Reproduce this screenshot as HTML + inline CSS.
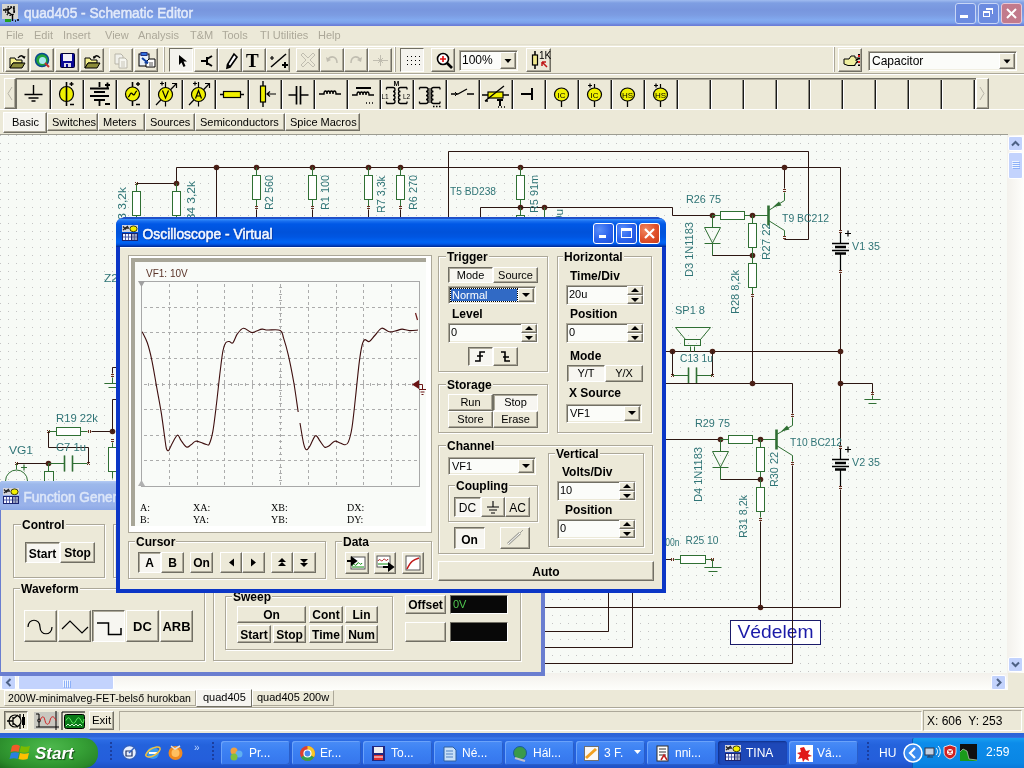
<!DOCTYPE html>
<html><head><meta charset="utf-8">
<style>
*{margin:0;padding:0;box-sizing:border-box}
html,body{width:1024px;height:768px;overflow:hidden;background:#ECE9D8;}
body{will-change:transform;font-family:"Liberation Sans",sans-serif;font-size:11px;color:#000}
.a{position:absolute}
.btn{position:absolute;background:#ECE9D8;border:1px solid;border-color:#FFFFFF #716F64 #716F64 #FFFFFF;box-shadow:inset -1px -1px 0 #ACA899;text-align:center;white-space:nowrap}
.btnp{position:absolute;background:#F6F5EF;border:1px solid;border-color:#716F64 #FFFFFF #FFFFFF #716F64;box-shadow:inset 1px 1px 0 #ACA899;text-align:center;white-space:nowrap}
.tb{position:absolute;background:#ECE9D8;border:1px solid;border-color:#FFFFFF #ACA899 #ACA899 #FFFFFF;}
.tbp{position:absolute;background:#F4F3EE;border:1px solid;border-color:#ACA899 #FFFFFF #FFFFFF #ACA899;}
.grp{position:absolute;border:1px solid #ACA899;box-shadow:1px 1px 0 #FFFFFF, inset 1px 1px 0 #FFFFFF}
.gl{position:absolute;background:#ECE9D8;font-weight:bold;font-size:12px;padding:0 2px;line-height:12px;white-space:nowrap}
.edit{position:absolute;background:#FBFCF9;border:1px solid;border-color:#ACA899 #FFFFFF #FFFFFF #ACA899;box-shadow:inset 1px 1px 0 #716F64;white-space:nowrap}
.t{position:absolute;white-space:nowrap;line-height:1}
svg{position:absolute;overflow:visible}
</style></head><body>


<!-- chrome -->
<!-- ===== Main title bar (inactive) ===== -->
<div class="a" style="left:0;top:0;width:1024px;height:26px;background:linear-gradient(#A0BCF0 0,#7E9EE2 3px,#7896DE 10px,#7C9CE2 15px,#82AAF0 20px,#7AA0EA 23px,#6A7ED8 25px,#6A7ED8 26px)"></div>
<div class="a" style="left:0;top:0;width:1024px;height:26px;background:linear-gradient(90deg,rgba(255,255,255,0) 0,rgba(255,255,255,0) 60%,rgba(120,150,230,0.0) 100%)"></div>
<svg style="left:2px;top:4px" width="17" height="16"><rect x="0" y="0" width="16" height="15" fill="#D6D6D0"/><circle cx="8" cy="7" r="4.5" fill="none" stroke="#000" stroke-width="1.2" stroke-dasharray="1.5 1.5"/><path d="M1 6h5M6 4v6M6 6l4-3M6 8l4 3M10.5 10v7M12 2v7" stroke="#000" stroke-width="1.4"/><rect x="3" y="15" width="6" height="3" fill="#20A020"/><path d="M13 17h1M15 16h2" stroke="#000" stroke-width="1.4"/></svg>
<svg style="left:24px;top:4px" width="180" height="20"><text x="0" y="14" font-family="Liberation Sans" font-size="14" fill="#E2EAFA" stroke="#E2EAFA" stroke-width="0.5" textLength="169" lengthAdjust="spacingAndGlyphs">quad405 - Schematic Editor</text></svg>
<!-- title buttons -->
<div class="a" style="left:955px;top:3px;width:21px;height:21px;border-radius:3px;background:#6B8BE0;border:1px solid #C8D6F6"></div>
<div class="a" style="left:960px;top:15px;width:8px;height:3px;background:#fff"></div>
<div class="a" style="left:978px;top:3px;width:21px;height:21px;border-radius:3px;background:#6B8BE0;border:1px solid #C8D6F6"></div>
<div class="a" style="left:983px;top:11px;width:7px;height:6px;border:1px solid #fff;border-top-width:2px"></div>
<div class="a" style="left:986px;top:8px;width:7px;height:6px;border:1px solid #fff;border-top-width:2px;border-left:none;border-bottom:none"></div>
<div class="a" style="left:1001px;top:3px;width:21px;height:21px;border-radius:3px;background:#C27A8C;border:1px solid #E8C8D6"></div>
<svg style="left:1001px;top:3px" width="21" height="21"><path d="M6 6L15 15M15 6L6 15" stroke="#fff" stroke-width="2"/></svg>

<!-- ===== Menu bar ===== -->
<div class="a" style="left:0;top:26px;width:1024px;height:19px;background:#ECE9D8"></div>
<div class="t" style="top:30px;left:6px;color:#ACA899">File</div>
<div class="t" style="top:30px;left:34px;color:#ACA899">Edit</div>
<div class="t" style="top:30px;left:63px;color:#ACA899">Insert</div>
<div class="t" style="top:30px;left:105px;color:#ACA899">View</div>
<div class="t" style="top:30px;left:138px;color:#ACA899">Analysis</div>
<div class="t" style="top:30px;left:190px;color:#ACA899">T&amp;M</div>
<div class="t" style="top:30px;left:222px;color:#ACA899">Tools</div>
<div class="t" style="top:30px;left:260px;color:#ACA899">TI Utilities</div>
<div class="t" style="top:30px;left:318px;color:#ACA899">Help</div>
<div class="a" style="left:0;top:44px;width:1024px;height:1px;background:#E2DFCE"></div>


<!-- toolbars -->
<div class="a" style="left:0;top:46px;width:1024px;height:1px;background:#FFFFFF"></div>
<div class="a" style="left:0;top:73px;width:1024px;height:1px;background:#ACA899"></div>
<div class="a" style="left:0;top:74px;width:1024px;height:1px;background:#FFFFFF"></div>
<div class="a" style="left:2px;top:47px;width:1px;height:25px;background:#FFFFFF"></div>
<div class="a" style="left:3px;top:47px;width:1px;height:25px;background:#ACA899"></div>
<div class="a" style="left:163px;top:47px;width:1px;height:25px;background:#FFFFFF"></div>
<div class="a" style="left:164px;top:47px;width:1px;height:25px;background:#ACA899"></div>
<div class="a" style="left:394px;top:47px;width:1px;height:25px;background:#FFFFFF"></div>
<div class="a" style="left:395px;top:47px;width:1px;height:25px;background:#ACA899"></div>
<div class="a" style="left:833px;top:47px;width:1px;height:25px;background:#FFFFFF"></div>
<div class="a" style="left:834px;top:47px;width:1px;height:25px;background:#ACA899"></div>
<div class="a" style="left:5px;top:48px;width:24px;height:24px;background:#ECE9D8;border:1px solid;border-color:#FFFFFF #716F64 #716F64 #FFFFFF;box-shadow:inset -1px -1px 0 #ACA899"></div>
<div class="a" style="left:30px;top:48px;width:24px;height:24px;background:#ECE9D8;border:1px solid;border-color:#FFFFFF #716F64 #716F64 #FFFFFF;box-shadow:inset -1px -1px 0 #ACA899"></div>
<div class="a" style="left:55px;top:48px;width:24px;height:24px;background:#ECE9D8;border:1px solid;border-color:#FFFFFF #716F64 #716F64 #FFFFFF;box-shadow:inset -1px -1px 0 #ACA899"></div>
<div class="a" style="left:80px;top:48px;width:24px;height:24px;background:#ECE9D8;border:1px solid;border-color:#FFFFFF #716F64 #716F64 #FFFFFF;box-shadow:inset -1px -1px 0 #ACA899"></div>
<div class="a" style="left:109px;top:48px;width:24px;height:24px;background:#ECE9D8;border:1px solid;border-color:#FFFFFF #716F64 #716F64 #FFFFFF;box-shadow:inset -1px -1px 0 #ACA899"></div>
<div class="a" style="left:134px;top:48px;width:24px;height:24px;background:#ECE9D8;border:1px solid;border-color:#FFFFFF #716F64 #716F64 #FFFFFF;box-shadow:inset -1px -1px 0 #ACA899"></div>
<div class="a" style="left:169px;top:48px;width:24px;height:24px;background:#F4F3EE;border:1px solid;border-color:#716F64 #FFFFFF #FFFFFF #716F64"></div>
<div class="a" style="left:194px;top:48px;width:24px;height:24px;background:#ECE9D8;border:1px solid;border-color:#FFFFFF #716F64 #716F64 #FFFFFF;box-shadow:inset -1px -1px 0 #ACA899"></div>
<div class="a" style="left:218px;top:48px;width:24px;height:24px;background:#ECE9D8;border:1px solid;border-color:#FFFFFF #716F64 #716F64 #FFFFFF;box-shadow:inset -1px -1px 0 #ACA899"></div>
<div class="a" style="left:242px;top:48px;width:24px;height:24px;background:#ECE9D8;border:1px solid;border-color:#FFFFFF #716F64 #716F64 #FFFFFF;box-shadow:inset -1px -1px 0 #ACA899"></div>
<div class="a" style="left:266px;top:48px;width:24px;height:24px;background:#ECE9D8;border:1px solid;border-color:#FFFFFF #716F64 #716F64 #FFFFFF;box-shadow:inset -1px -1px 0 #ACA899"></div>
<div class="a" style="left:296px;top:48px;width:24px;height:24px;background:#ECE9D8;border:1px solid;border-color:#FFFFFF #716F64 #716F64 #FFFFFF;box-shadow:inset -1px -1px 0 #ACA899"></div>
<div class="a" style="left:320px;top:48px;width:24px;height:24px;background:#ECE9D8;border:1px solid;border-color:#FFFFFF #716F64 #716F64 #FFFFFF;box-shadow:inset -1px -1px 0 #ACA899"></div>
<div class="a" style="left:344px;top:48px;width:24px;height:24px;background:#ECE9D8;border:1px solid;border-color:#FFFFFF #716F64 #716F64 #FFFFFF;box-shadow:inset -1px -1px 0 #ACA899"></div>
<div class="a" style="left:368px;top:48px;width:24px;height:24px;background:#ECE9D8;border:1px solid;border-color:#FFFFFF #716F64 #716F64 #FFFFFF;box-shadow:inset -1px -1px 0 #ACA899"></div>
<div class="a" style="left:400px;top:48px;width:24px;height:24px;background:#F4F3EE;border:1px solid;border-color:#716F64 #FFFFFF #FFFFFF #716F64"></div>
<div class="a" style="left:431px;top:48px;width:24px;height:24px;background:#ECE9D8;border:1px solid;border-color:#FFFFFF #716F64 #716F64 #FFFFFF;box-shadow:inset -1px -1px 0 #ACA899"></div>
<div class="a" style="left:526px;top:48px;width:25px;height:24px;background:#ECE9D8;border:1px solid;border-color:#FFFFFF #716F64 #716F64 #FFFFFF;box-shadow:inset -1px -1px 0 #ACA899"></div>
<div class="a" style="left:838px;top:48px;width:24px;height:24px;background:#ECE9D8;border:1px solid;border-color:#FFFFFF #716F64 #716F64 #FFFFFF;box-shadow:inset -1px -1px 0 #ACA899"></div>
<svg style="left:9px;top:55px" width="18" height="15"><path d="M1 3h5l1 2h6v3H4L1 13z" fill="#F5F08C" stroke="#000" stroke-width="1"/><path d="M1 13L4 8h12l-3 5z" fill="#8C8C3A" stroke="#000" stroke-width="1"/><path d="M9 3c2-3 5-3 6 0" stroke="#000" fill="none" stroke-width="1.3"/><path d="M13 2l2.5 2 1-3z" fill="#000"/></svg>
<svg style="left:84px;top:55px" width="18" height="15"><path d="M1 3h5l1 2h6v3H4L1 13z" fill="#F5F08C" stroke="#000" stroke-width="1"/><path d="M1 13L4 8h12l-3 5z" fill="#8C8C3A" stroke="#000" stroke-width="1"/><path d="M10 3c1-3 4-3 6 0" stroke="#000" fill="none" stroke-width="1.3"/><path d="M9 1l0.5 3 2.5-1.5z" fill="#000"/></svg>
<svg style="left:34px;top:52px" width="18" height="18"><circle cx="8" cy="8" r="6.5" fill="#22A33A" stroke="#0A4A90" stroke-width="1.5"/><circle cx="8.5" cy="8.5" r="3.5" fill="#A8E8F0"/><path d="M11 11l4 4" stroke="#C03030" stroke-width="2"/></svg>
<svg style="left:60px;top:53px" width="15" height="15"><rect x="0.5" y="0.5" width="14" height="14" rx="1" fill="#0A0A96" stroke="#000030"/><rect x="3" y="1" width="9" height="7" fill="#F0F0F8"/><rect x="4" y="10" width="7" height="4" fill="#D8D8E8"/><rect x="6" y="11" width="2" height="3" fill="#0A0A96"/></svg>
<svg style="left:112px;top:52px" width="18" height="18"><path d="M3 2h6l2 2v8H3z" fill="#F0F0EA" stroke="#B8B5A8"/><path d="M7 6h6l2 2v8H7z" fill="#F6F6F0" stroke="#B8B5A8"/><path d="M9 10h4M9 12h4M9 14h4" stroke="#C8C5B8"/></svg>
<svg style="left:137px;top:51px" width="20" height="20"><rect x="2" y="3" width="10" height="12" fill="#E8F0F8" stroke="#000"/><rect x="4" y="1.5" width="6" height="3" fill="#3070E0" stroke="#203080"/><path d="M9 16h9V8h-6l-3 3z" fill="#FFFFFF" stroke="#000"/><path d="M5 7l6 5" stroke="#1040A0" stroke-width="2"/><path d="M11 13l-1-4-3 3z" fill="#1040A0"/><path d="M12 12h4M12 14h4" stroke="#555"/></svg>
<svg style="left:177px;top:54px" width="12" height="14"><path d="M2 1v10l2.5-2.5 2 4.5 2-1-2-4.5h3.5z" fill="#000"/></svg>
<svg style="left:199px;top:54px" width="16" height="14"><path d="M2 7h6M8 3v8M8 5l5-3M8 9l5 3" stroke="#000" stroke-width="2" fill="none"/></svg>
<svg style="left:224px;top:53px" width="14" height="16"><path d="M10 1l3 3-7 10-3 1 0.5-3.5z" fill="#fff" stroke="#000" stroke-width="1.6"/><path d="M3.5 11.5l2.5 2.5" stroke="#000" stroke-width="2"/></svg>
<div class="t" style="left:246px;top:51px;font-family:'Liberation Serif',serif;font-weight:bold;font-size:19px">T</div>
<svg style="left:269px;top:51px" width="20" height="20"><path d="M2 16L17 3" stroke="#000" stroke-width="1.5"/><path d="M3 5v4M1 7h4" stroke="#000" stroke-width="1.2"/><path d="M13 14h6M16 11v6" stroke="#000" stroke-width="2"/></svg>
<svg style="left:300px;top:51px" width="17" height="17"><path d="M3 2l5 5 5-5 2 2-5 5 5 5-2 2-5-5-5 5-2-2 5-5-5-5z" fill="none" stroke="#C0BDB0"/></svg>
<svg style="left:324px;top:53px" width="16" height="14"><path d="M4 6c4-4 9-2 9 4" stroke="#C0BDB0" stroke-width="1.5" fill="none"/><path d="M2 4l1 5 4-2z" fill="#C0BDB0"/></svg>
<svg style="left:348px;top:53px" width="16" height="14"><path d="M12 6c-4-4-9-2-9 4" stroke="#C0BDB0" stroke-width="1.5" fill="none"/><path d="M14 4l-1 5-4-2z" fill="#C0BDB0"/></svg>
<svg style="left:372px;top:52px" width="17" height="17"><path d="M1 8.5h15M8.5 3v11M6 6l5 5M6 11l5-5" stroke="#C0BDB0" stroke-width="1"/></svg>
<svg style="left:404px;top:52px" width="18" height="16"><rect x="3" y="4" width="1" height="1" fill="#000"/><rect x="3" y="8" width="1" height="1" fill="#000"/><rect x="3" y="12" width="1" height="1" fill="#000"/><rect x="7" y="4" width="1" height="1" fill="#000"/><rect x="7" y="8" width="1" height="1" fill="#000"/><rect x="7" y="12" width="1" height="1" fill="#000"/><rect x="11" y="4" width="1" height="1" fill="#000"/><rect x="11" y="8" width="1" height="1" fill="#000"/><rect x="11" y="12" width="1" height="1" fill="#000"/><rect x="15" y="4" width="1" height="1" fill="#000"/><rect x="15" y="8" width="1" height="1" fill="#000"/><rect x="15" y="12" width="1" height="1" fill="#000"/></svg>
<svg style="left:435px;top:51px" width="20" height="20"><circle cx="8" cy="8" r="5.5" fill="#FFFFFF" stroke="#000" stroke-width="1.6"/><path d="M8 5v6M5 8h6" stroke="#E01010" stroke-width="1.6"/><path d="M12 12l5 5" stroke="#000" stroke-width="2.6"/></svg>
<div class="a" style="left:459px;top:50px;width:59px;height:21px;background:#FBFCF9;border:1px solid;border-color:#ACA899 #FFFFFF #FFFFFF #ACA899;box-shadow:inset 1px 1px 0 #716F64, inset -1px -1px 0 #F1EFE2"></div>
<div class="t" style="left:462px;top:54px;font-size:12px">100%</div>
<div class="a" style="left:500px;top:52px;width:16px;height:17px;background:#ECE9D8;border:1px solid;border-color:#FFFFFF #716F64 #716F64 #FFFFFF;box-shadow:inset -1px -1px 0 #ACA899"></div>
<svg style="left:500px;top:52px" width="16" height="17"><path d="M4.5 7h7l-3.5 4z" fill="#000"/></svg>
<svg style="left:530px;top:50px" width="20" height="20"><path d="M5 1v4M5 15v4" stroke="#000" stroke-width="1.5"/><rect x="2.5" y="5" width="5" height="10" fill="#F0E88C" stroke="#000" stroke-width="1.2"/><text x="9" y="9" font-size="10" font-family="Liberation Sans" fill="#000">1K</text><path d="M17 17l-5-5M12 12v4M12 12h4" stroke="#C01818" stroke-width="1.5"/></svg>
<svg style="left:842px;top:51px" width="20" height="18"><path d="M2 8h5l2-3h4v2h3v1.5h-2v1.5h1.5v1.5H14v1.5h-1v1.5H6L2 13z" fill="#F0F0A0" stroke="#000" stroke-width="1"/><path d="M17 3v12" stroke="#000" stroke-width="2" stroke-dasharray="2 1.5"/><path d="M17 4v2M17 10v2" stroke="#E02020" stroke-width="2"/></svg>
<div class="a" style="left:868px;top:51px;width:149px;height:20px;background:#FBFCF9;border:1px solid;border-color:#ACA899 #FFFFFF #FFFFFF #ACA899;box-shadow:inset 1px 1px 0 #716F64, inset -1px -1px 0 #F1EFE2"></div>
<div class="t" style="left:872px;top:55px;font-size:12px">Capacitor</div>
<div class="a" style="left:999px;top:53px;width:16px;height:16px;background:#ECE9D8;border:1px solid;border-color:#FFFFFF #716F64 #716F64 #FFFFFF;box-shadow:inset -1px -1px 0 #ACA899"></div>
<svg style="left:999px;top:53px" width="16" height="16"><path d="M4.5 6.5h7l-3.5 4z" fill="#000"/></svg>
<div class="a" style="left:4px;top:78px;width:12px;height:31px;background:#ECE9D8;border:1px solid;border-color:#FFFFFF #716F64 #716F64 #FFFFFF;box-shadow:inset -1px -1px 0 #ACA899"></div>
<svg style="left:4px;top:78px" width="12" height="31"><path d="M8 9l-4 6.5 4 6.5" stroke="#B8B5A8" fill="none" stroke-width="1"/></svg>
<div class="a" style="left:976px;top:78px;width:13px;height:31px;background:#ECE9D8;border:1px solid;border-color:#FFFFFF #716F64 #716F64 #FFFFFF;box-shadow:inset -1px -1px 0 #ACA899"></div>
<svg style="left:976px;top:78px" width="13" height="31"><path d="M4 9l4 6.5-4 6.5" stroke="#B8B5A8" fill="none" stroke-width="1"/></svg>
<div class="a" style="left:16px;top:78px;width:960px;height:31px;background:#ECE9D8;border-top:1px solid #716F64;border-left:1px solid #716F64"></div>
<div class="a" style="left:17px;top:79px;width:959px;height:1px;background:#ACA899"></div>
<div class="a" style="left:50px;top:80px;width:1px;height:29px;background:#1A1A1A"></div>
<div class="a" style="left:49px;top:80px;width:1px;height:29px;background:#8A887C"></div>
<div class="a" style="left:51px;top:80px;width:1px;height:29px;background:#FFFFFF"></div>
<div class="a" style="left:83px;top:80px;width:1px;height:29px;background:#1A1A1A"></div>
<div class="a" style="left:82px;top:80px;width:1px;height:29px;background:#8A887C"></div>
<div class="a" style="left:84px;top:80px;width:1px;height:29px;background:#FFFFFF"></div>
<div class="a" style="left:116px;top:80px;width:1px;height:29px;background:#1A1A1A"></div>
<div class="a" style="left:115px;top:80px;width:1px;height:29px;background:#8A887C"></div>
<div class="a" style="left:117px;top:80px;width:1px;height:29px;background:#FFFFFF"></div>
<div class="a" style="left:149px;top:80px;width:1px;height:29px;background:#1A1A1A"></div>
<div class="a" style="left:148px;top:80px;width:1px;height:29px;background:#8A887C"></div>
<div class="a" style="left:150px;top:80px;width:1px;height:29px;background:#FFFFFF"></div>
<div class="a" style="left:182px;top:80px;width:1px;height:29px;background:#1A1A1A"></div>
<div class="a" style="left:181px;top:80px;width:1px;height:29px;background:#8A887C"></div>
<div class="a" style="left:183px;top:80px;width:1px;height:29px;background:#FFFFFF"></div>
<div class="a" style="left:215px;top:80px;width:1px;height:29px;background:#1A1A1A"></div>
<div class="a" style="left:214px;top:80px;width:1px;height:29px;background:#8A887C"></div>
<div class="a" style="left:216px;top:80px;width:1px;height:29px;background:#FFFFFF"></div>
<div class="a" style="left:248px;top:80px;width:1px;height:29px;background:#1A1A1A"></div>
<div class="a" style="left:247px;top:80px;width:1px;height:29px;background:#8A887C"></div>
<div class="a" style="left:249px;top:80px;width:1px;height:29px;background:#FFFFFF"></div>
<div class="a" style="left:281px;top:80px;width:1px;height:29px;background:#1A1A1A"></div>
<div class="a" style="left:280px;top:80px;width:1px;height:29px;background:#8A887C"></div>
<div class="a" style="left:282px;top:80px;width:1px;height:29px;background:#FFFFFF"></div>
<div class="a" style="left:314px;top:80px;width:1px;height:29px;background:#1A1A1A"></div>
<div class="a" style="left:313px;top:80px;width:1px;height:29px;background:#8A887C"></div>
<div class="a" style="left:315px;top:80px;width:1px;height:29px;background:#FFFFFF"></div>
<div class="a" style="left:347px;top:80px;width:1px;height:29px;background:#1A1A1A"></div>
<div class="a" style="left:346px;top:80px;width:1px;height:29px;background:#8A887C"></div>
<div class="a" style="left:348px;top:80px;width:1px;height:29px;background:#FFFFFF"></div>
<div class="a" style="left:380px;top:80px;width:1px;height:29px;background:#1A1A1A"></div>
<div class="a" style="left:379px;top:80px;width:1px;height:29px;background:#8A887C"></div>
<div class="a" style="left:381px;top:80px;width:1px;height:29px;background:#FFFFFF"></div>
<div class="a" style="left:413px;top:80px;width:1px;height:29px;background:#1A1A1A"></div>
<div class="a" style="left:412px;top:80px;width:1px;height:29px;background:#8A887C"></div>
<div class="a" style="left:414px;top:80px;width:1px;height:29px;background:#FFFFFF"></div>
<div class="a" style="left:446px;top:80px;width:1px;height:29px;background:#1A1A1A"></div>
<div class="a" style="left:445px;top:80px;width:1px;height:29px;background:#8A887C"></div>
<div class="a" style="left:447px;top:80px;width:1px;height:29px;background:#FFFFFF"></div>
<div class="a" style="left:479px;top:80px;width:1px;height:29px;background:#1A1A1A"></div>
<div class="a" style="left:478px;top:80px;width:1px;height:29px;background:#8A887C"></div>
<div class="a" style="left:480px;top:80px;width:1px;height:29px;background:#FFFFFF"></div>
<div class="a" style="left:512px;top:80px;width:1px;height:29px;background:#1A1A1A"></div>
<div class="a" style="left:511px;top:80px;width:1px;height:29px;background:#8A887C"></div>
<div class="a" style="left:513px;top:80px;width:1px;height:29px;background:#FFFFFF"></div>
<div class="a" style="left:545px;top:80px;width:1px;height:29px;background:#1A1A1A"></div>
<div class="a" style="left:544px;top:80px;width:1px;height:29px;background:#8A887C"></div>
<div class="a" style="left:546px;top:80px;width:1px;height:29px;background:#FFFFFF"></div>
<div class="a" style="left:578px;top:80px;width:1px;height:29px;background:#1A1A1A"></div>
<div class="a" style="left:577px;top:80px;width:1px;height:29px;background:#8A887C"></div>
<div class="a" style="left:579px;top:80px;width:1px;height:29px;background:#FFFFFF"></div>
<div class="a" style="left:611px;top:80px;width:1px;height:29px;background:#1A1A1A"></div>
<div class="a" style="left:610px;top:80px;width:1px;height:29px;background:#8A887C"></div>
<div class="a" style="left:612px;top:80px;width:1px;height:29px;background:#FFFFFF"></div>
<div class="a" style="left:644px;top:80px;width:1px;height:29px;background:#1A1A1A"></div>
<div class="a" style="left:643px;top:80px;width:1px;height:29px;background:#8A887C"></div>
<div class="a" style="left:645px;top:80px;width:1px;height:29px;background:#FFFFFF"></div>
<div class="a" style="left:677px;top:80px;width:1px;height:29px;background:#1A1A1A"></div>
<div class="a" style="left:676px;top:80px;width:1px;height:29px;background:#8A887C"></div>
<div class="a" style="left:678px;top:80px;width:1px;height:29px;background:#FFFFFF"></div>
<div class="a" style="left:710px;top:80px;width:1px;height:29px;background:#1A1A1A"></div>
<div class="a" style="left:709px;top:80px;width:1px;height:29px;background:#8A887C"></div>
<div class="a" style="left:711px;top:80px;width:1px;height:29px;background:#FFFFFF"></div>
<div class="a" style="left:743px;top:80px;width:1px;height:29px;background:#1A1A1A"></div>
<div class="a" style="left:742px;top:80px;width:1px;height:29px;background:#8A887C"></div>
<div class="a" style="left:744px;top:80px;width:1px;height:29px;background:#FFFFFF"></div>
<div class="a" style="left:776px;top:80px;width:1px;height:29px;background:#1A1A1A"></div>
<div class="a" style="left:775px;top:80px;width:1px;height:29px;background:#8A887C"></div>
<div class="a" style="left:777px;top:80px;width:1px;height:29px;background:#FFFFFF"></div>
<div class="a" style="left:809px;top:80px;width:1px;height:29px;background:#1A1A1A"></div>
<div class="a" style="left:808px;top:80px;width:1px;height:29px;background:#8A887C"></div>
<div class="a" style="left:810px;top:80px;width:1px;height:29px;background:#FFFFFF"></div>
<div class="a" style="left:842px;top:80px;width:1px;height:29px;background:#1A1A1A"></div>
<div class="a" style="left:841px;top:80px;width:1px;height:29px;background:#8A887C"></div>
<div class="a" style="left:843px;top:80px;width:1px;height:29px;background:#FFFFFF"></div>
<div class="a" style="left:875px;top:80px;width:1px;height:29px;background:#1A1A1A"></div>
<div class="a" style="left:874px;top:80px;width:1px;height:29px;background:#8A887C"></div>
<div class="a" style="left:876px;top:80px;width:1px;height:29px;background:#FFFFFF"></div>
<div class="a" style="left:908px;top:80px;width:1px;height:29px;background:#1A1A1A"></div>
<div class="a" style="left:907px;top:80px;width:1px;height:29px;background:#8A887C"></div>
<div class="a" style="left:909px;top:80px;width:1px;height:29px;background:#FFFFFF"></div>
<div class="a" style="left:941px;top:80px;width:1px;height:29px;background:#1A1A1A"></div>
<div class="a" style="left:940px;top:80px;width:1px;height:29px;background:#8A887C"></div>
<div class="a" style="left:942px;top:80px;width:1px;height:29px;background:#FFFFFF"></div>
<div class="a" style="left:974px;top:80px;width:1px;height:29px;background:#1A1A1A"></div>
<div class="a" style="left:973px;top:80px;width:1px;height:29px;background:#8A887C"></div>
<div class="a" style="left:975px;top:80px;width:1px;height:29px;background:#FFFFFF"></div>
<div class="a" style="left:0;top:109px;width:1024px;height:1px;background:#FFFFFF"></div>
<svg style="left:17px;top:79px" width="33" height="30"><path d="M16.5 6v9" stroke="#000" stroke-width="1.4"/><path d="M7.5 15.5h18M11.5 19h10M14.5 22h4" stroke="#000" stroke-width="1.6"/></svg>
<svg style="left:50px;top:79px" width="33" height="30"><ellipse cx="16.5" cy="15" rx="7" ry="7.5" fill="#F0F000" stroke="#000" stroke-width="1.2"/><path d="M16.5 3v24" stroke="#000" stroke-width="1.6"/><path d="M19.5 5h4M21.5 3v4M20 25.5h4" stroke="#000" stroke-width="1.4"/></svg>
<svg style="left:83px;top:79px" width="33" height="30"><path d="M16.5 3v5M16.5 22v5M7 9.5h19M11 13h11M7 17h19M11 21h11M22 6h5M24.5 3.5v5M22 25h5" stroke="#000" stroke-width="1.8"/></svg>
<svg style="left:116px;top:79px" width="33" height="30"><circle cx="16.5" cy="15" r="7" fill="#F0F000" stroke="#000" stroke-width="1.2"/><path d="M16.5 3v5M16.5 22v5" stroke="#000" stroke-width="1.6"/><path d="M12 18c2 0 2-6 4.5-3s2.5 -3 4.5-3" stroke="#000" stroke-width="1.2" fill="none"/><path d="M20 5h4M22 3v4M20 25.5h4" stroke="#000" stroke-width="1.4"/></svg>
<svg style="left:149px;top:79px" width="33" height="30"><path d="M7 26L27 5" stroke="#000" stroke-width="1.2"/><path d="M23 4.5h4.5v4.5" stroke="#000" stroke-width="1.2" fill="none"/><circle cx="16.5" cy="15.5" r="7" fill="#F0F000" stroke="#000" stroke-width="1.2"/><path d="M13.5 11.5l3 7.5 3-7.5" stroke="#000" stroke-width="1.2" fill="none"/><path d="M11 4.5h4M13 2.5v4M16.5 3v5.5M16.5 22.5v5" stroke="#000" stroke-width="1.2"/></svg>
<svg style="left:182px;top:79px" width="33" height="30"><path d="M7 26L27 5" stroke="#000" stroke-width="1.2"/><path d="M23 4.5h4.5v4.5" stroke="#000" stroke-width="1.2" fill="none"/><circle cx="16.5" cy="15.5" r="7" fill="#F0F000" stroke="#000" stroke-width="1.2"/><path d="M13.5 19.5l3-8 3 8M14.5 17h4" stroke="#000" stroke-width="1.2" fill="none"/><path d="M11 4.5h4M13 2.5v4M16.5 3v5.5M16.5 22.5v5" stroke="#000" stroke-width="1.2"/></svg>
<svg style="left:215px;top:79px" width="33" height="30"><path d="M5 15.5h4M25 15.5h4" stroke="#000" stroke-width="1.6"/><rect x="8.5" y="12.5" width="17" height="6" fill="#F0F000" stroke="#000" stroke-width="1.2"/></svg>
<svg style="left:248px;top:79px" width="33" height="30"><path d="M15 2v5M15 23v5" stroke="#000" stroke-width="1.4"/><rect x="12.5" y="7" width="5" height="16" fill="#F0F000" stroke="#000" stroke-width="1.2"/><path d="M28 15h-9M22 12.5l-3 2.5 3 2.5" stroke="#000" stroke-width="1.2" fill="none"/></svg>
<svg style="left:281px;top:79px" width="33" height="30"><path d="M7.5 16h8M19.5 16h8" stroke="#000" stroke-width="1.6"/><path d="M15.5 7v18.5M19.5 7v18.5" stroke="#000" stroke-width="1.7"/></svg>
<svg style="left:314px;top:79px" width="33" height="30"><path d="M5 15h5c0-4 3-4 3 0 0-4 3-4 3 0 0-4 3-4 3 0 0-4 3-4 3 0h5" stroke="#000" stroke-width="1.4" fill="none"/></svg>
<svg style="left:347px;top:79px" width="33" height="30"><path d="M9 9h15" stroke="#000" stroke-width="2"/><path d="M5 16h5c0-4 3-4 3 0 0-4 3-4 3 0 0-4 3-4 3 0 0-4 3-4 3 0h5" stroke="#000" stroke-width="1.4" fill="none"/><path d="M19 24h1M22 24h1M25 24h1" stroke="#000" stroke-width="1.5"/></svg>
<svg style="left:380px;top:79px" width="33" height="30"><path d="M6.5 8.5h6.5a2 2 0 0 1 0 4a2 2 0 0 1 0 4a2 2 0 0 1 0 4a2 2 0 0 1 0 4h-6.5 M27 8.5h-6.5a2 2 0 0 0 0 4a2 2 0 0 0 0 4a2 2 0 0 0 0 4a2 2 0 0 0 0 4h6.5 M6.5 8.5v2M6.5 24.5v-2M27 8.5v2M27 24.5v-2" stroke="#000" stroke-width="1.3" fill="none"/><text x="13.5" y="7" font-size="7" font-weight="bold" font-family="Liberation Sans">M</text><text x="1.5" y="20" font-size="6.5" font-family="Liberation Sans">L1</text><text x="23" y="20" font-size="6.5" font-family="Liberation Sans">L2</text></svg>
<svg style="left:413px;top:79px" width="33" height="30"><path d="M6.5 8.5h6.5a2 2 0 0 1 0 4a2 2 0 0 1 0 4a2 2 0 0 1 0 4a2 2 0 0 1 0 4h-6.5 M27 8.5h-6.5a2 2 0 0 0 0 4a2 2 0 0 0 0 4a2 2 0 0 0 0 4a2 2 0 0 0 0 4h6.5 M6.5 8.5v2M6.5 24.5v-2M27 8.5v2M27 24.5v-2" stroke="#000" stroke-width="1.3" fill="none"/><path d="M16 9v15M18 9v15" stroke="#000" stroke-width="1"/><path d="M20 27.5h1.5M23 27.5h1.5M26 27.5h1.5" stroke="#000" stroke-width="1.5"/></svg>
<svg style="left:446px;top:79px" width="33" height="30"><path d="M5 15h7M21 15h7M12 15l9-5" stroke="#000" stroke-width="1.4" fill="none"/><path d="M9 13l2 2-2 2" stroke="#000" stroke-width="1" fill="none"/></svg>
<svg style="left:479px;top:79px" width="33" height="30"><path d="M3 16h6M24 16h6" stroke="#000" stroke-width="1.5"/><rect x="9" y="13" width="15" height="6" fill="#F0F000" stroke="#000" stroke-width="1.2"/><path d="M6 22L25 7M9 22h-3" stroke="#000" stroke-width="1.3" fill="none"/><path d="M18 21h6M21 21v6" stroke="#000" stroke-width="2"/><path d="M19 28h1M22 28h1M25 28h1" stroke="#000" stroke-width="1.5"/></svg>
<svg style="left:512px;top:79px" width="33" height="30"><path d="M9 15h11M20 9v12" stroke="#000" stroke-width="2"/></svg>
<svg style="left:545px;top:79px" width="33" height="30"><ellipse cx="16.5" cy="15.5" rx="7" ry="6.5" fill="#F0F000" stroke="#000" stroke-width="1.2"/><path d="M16.5 22v6" stroke="#000" stroke-width="1.3"/><text x="16.5" y="18.5" text-anchor="middle" font-size="8" font-family="Liberation Sans" fill="#000">IC</text></svg>
<svg style="left:578px;top:79px" width="33" height="30"><ellipse cx="16.5" cy="15.5" rx="7" ry="6.5" fill="#F0F000" stroke="#000" stroke-width="1.2"/><path d="M16.5 22v6" stroke="#000" stroke-width="1.3"/><text x="16.5" y="18.5" text-anchor="middle" font-size="8" font-family="Liberation Sans" fill="#000">IC</text><path d="M10 6.5h4M12 4.5v4M16.5 5v4" stroke="#000" stroke-width="1.2"/></svg>
<svg style="left:611px;top:79px" width="33" height="30"><ellipse cx="16.5" cy="15.5" rx="7" ry="6.5" fill="#F0F000" stroke="#000" stroke-width="1.2"/><path d="M16.5 22v6" stroke="#000" stroke-width="1.3"/><text x="16.5" y="18.5" text-anchor="middle" font-size="8" font-family="Liberation Sans" fill="#000">HS</text></svg>
<svg style="left:644px;top:79px" width="33" height="30"><ellipse cx="16.5" cy="15.5" rx="7" ry="6.5" fill="#F0F000" stroke="#000" stroke-width="1.2"/><path d="M16.5 22v6" stroke="#000" stroke-width="1.3"/><text x="16.5" y="18.5" text-anchor="middle" font-size="8" font-family="Liberation Sans" fill="#000">HS</text><path d="M10 6.5h4M12 4.5v4M16.5 5v4" stroke="#000" stroke-width="1.2"/></svg>
<div class="a" style="left:0;top:110px;width:1024px;height:24px;background:#ECE9D8"></div>
<div class="a" style="left:3px;top:112px;width:44px;height:21px;background:#F6F5F0;border:1px solid;border-color:#FFFFFF #716F64 #716F64 #FFFFFF;box-shadow:inset -1px -1px 0 #ACA899"></div>
<div class="t" style="left:12px;top:117px;font-size:11px">Basic</div>
<div class="a" style="left:47px;top:113px;width:51px;height:18px;background:#ECE9D8;border:1px solid;border-color:#FFFFFF #716F64 #716F64 #FFFFFF;box-shadow:inset -1px -1px 0 #ACA899"></div>
<div class="t" style="left:52px;top:117px;font-size:11px">Switches</div>
<div class="a" style="left:98px;top:113px;width:47px;height:18px;background:#ECE9D8;border:1px solid;border-color:#FFFFFF #716F64 #716F64 #FFFFFF;box-shadow:inset -1px -1px 0 #ACA899"></div>
<div class="t" style="left:103px;top:117px;font-size:11px">Meters</div>
<div class="a" style="left:145px;top:113px;width:50px;height:18px;background:#ECE9D8;border:1px solid;border-color:#FFFFFF #716F64 #716F64 #FFFFFF;box-shadow:inset -1px -1px 0 #ACA899"></div>
<div class="t" style="left:150px;top:117px;font-size:11px">Sources</div>
<div class="a" style="left:195px;top:113px;width:90px;height:18px;background:#ECE9D8;border:1px solid;border-color:#FFFFFF #716F64 #716F64 #FFFFFF;box-shadow:inset -1px -1px 0 #ACA899"></div>
<div class="t" style="left:200px;top:117px;font-size:11px">Semiconductors</div>
<div class="a" style="left:285px;top:113px;width:75px;height:18px;background:#ECE9D8;border:1px solid;border-color:#FFFFFF #716F64 #716F64 #FFFFFF;box-shadow:inset -1px -1px 0 #ACA899"></div>
<div class="t" style="left:290px;top:117px;font-size:11px">Spice Macros</div>
<!-- canvas -->
<!-- ===== Canvas ===== -->
<div class="a" style="left:0;top:134px;width:1008px;height:539px;background:#F7FAF6;border-top:1px solid #9D9D92"></div>
<svg style="left:0;top:134px" width="1008" height="539">
<defs><pattern id="dots" x="0" y="1" width="8" height="8" patternUnits="userSpaceOnUse"><rect x="0" y="0" width="1" height="1" fill="#C4C4C4"/></pattern></defs>
<rect x="0" y="1" width="1008" height="538" fill="url(#dots)"/>
</svg>


<!-- schem -->
<svg style="left:0;top:0" width="1008" height="673" font-family="Liberation Sans, sans-serif"><g>
<clipPath id="cc"><rect x="0" y="135" width="1007" height="538"/></clipPath><g clip-path="url(#cc)">
<rect x="730.5" y="620.5" width="90" height="24" fill="#FFFFFF" stroke="#1A1A6A" stroke-width="1"/>
<text x="737.5" y="638" font-size="19" fill="#1A1AA8" textLength="76" lengthAdjust="spacingAndGlyphs">Védelem</text>
<path d="M176.5 167.5 L840.5 167.5" stroke="#2C1612" stroke-width="1" fill="none"/>
<path d="M176.5 167.5 L176.5 183.5" stroke="#2C1612" stroke-width="1" fill="none"/>
<path d="M136.5 183.5 L176.5 183.5" stroke="#2C1612" stroke-width="1" fill="none"/>
<path d="M135.0 182.0l3 3M138.0 182.0l-3 3" stroke="#6A3020" stroke-width="1"/>
<circle cx="176.5" cy="183.5" r="2.8" fill="#4A2016"/>
<circle cx="216.5" cy="167.5" r="2.8" fill="#4A2016"/>
<circle cx="256.5" cy="167.5" r="2.8" fill="#4A2016"/>
<circle cx="312.5" cy="167.5" r="2.8" fill="#4A2016"/>
<circle cx="368.5" cy="167.5" r="2.8" fill="#4A2016"/>
<circle cx="400.5" cy="167.5" r="2.8" fill="#4A2016"/>
<path d="M136.5 183.5 L136.5 191.5" stroke="#2F6F33" stroke-width="1" fill="none"/>
<rect x="132.5" y="191.5" width="8" height="24" fill="#FFFFFF" stroke="#2F6F33" stroke-width="1"/>
<path d="M136.5 215.5 L136.5 220.5" stroke="#2F6F33" stroke-width="1" fill="none"/>
<path d="M176.5 183.5 L176.5 191.5" stroke="#2F6F33" stroke-width="1" fill="none"/>
<rect x="172.5" y="191.5" width="8" height="24" fill="#FFFFFF" stroke="#2F6F33" stroke-width="1"/>
<path d="M176.5 215.5 L176.5 220.5" stroke="#2F6F33" stroke-width="1" fill="none"/>
<path d="M256.5 167.5 L256.5 175.5" stroke="#2F6F33" stroke-width="1" fill="none"/>
<rect x="252.5" y="175.5" width="8" height="24" fill="#FFFFFF" stroke="#2F6F33" stroke-width="1"/>
<path d="M256.5 199.5 L256.5 206.5" stroke="#2F6F33" stroke-width="1" fill="none"/>
<path d="M255.0 206.5h3M255.0 208.5h3" stroke="#6A3020" stroke-width="1"/>
<path d="M256.5 209.5 L256.5 220.5" stroke="#2C1612" stroke-width="1" fill="none"/>
<path d="M312.5 167.5 L312.5 175.5" stroke="#2F6F33" stroke-width="1" fill="none"/>
<rect x="308.5" y="175.5" width="8" height="24" fill="#FFFFFF" stroke="#2F6F33" stroke-width="1"/>
<path d="M312.5 199.5 L312.5 206.5" stroke="#2F6F33" stroke-width="1" fill="none"/>
<path d="M311.0 206.5h3M311.0 208.5h3" stroke="#6A3020" stroke-width="1"/>
<path d="M312.5 209.5 L312.5 220.5" stroke="#2C1612" stroke-width="1" fill="none"/>
<path d="M368.5 167.5 L368.5 175.5" stroke="#2F6F33" stroke-width="1" fill="none"/>
<rect x="364.5" y="175.5" width="8" height="24" fill="#FFFFFF" stroke="#2F6F33" stroke-width="1"/>
<path d="M368.5 199.5 L368.5 206.5" stroke="#2F6F33" stroke-width="1" fill="none"/>
<path d="M367.0 206.5h3M367.0 208.5h3" stroke="#6A3020" stroke-width="1"/>
<path d="M368.5 209.5 L368.5 220.5" stroke="#2C1612" stroke-width="1" fill="none"/>
<path d="M400.5 167.5 L400.5 175.5" stroke="#2F6F33" stroke-width="1" fill="none"/>
<rect x="396.5" y="175.5" width="8" height="24" fill="#FFFFFF" stroke="#2F6F33" stroke-width="1"/>
<path d="M400.5 199.5 L400.5 206.5" stroke="#2F6F33" stroke-width="1" fill="none"/>
<path d="M399.0 206.5h3M399.0 208.5h3" stroke="#6A3020" stroke-width="1"/>
<path d="M400.5 209.5 L400.5 220.5" stroke="#2C1612" stroke-width="1" fill="none"/>
<path d="M216.5 167.5 L216.5 220.5" stroke="#2C1612" stroke-width="1" fill="none"/>
<path d="M448.5 151.5 L448.5 220.5" stroke="#2C1612" stroke-width="1" fill="none"/>
<path d="M448.5 151.5 L808.5 151.5" stroke="#2C1612" stroke-width="1" fill="none"/>
<path d="M808.5 151.5 L808.5 239.5" stroke="#2C1612" stroke-width="1" fill="none"/>
<path d="M784.5 239.5 L808.5 239.5" stroke="#2C1612" stroke-width="1" fill="none"/>
<circle cx="520.5" cy="167.5" r="2.8" fill="#4A2016"/>
<path d="M520.5 167.5 L520.5 175.5" stroke="#2F6F33" stroke-width="1" fill="none"/>
<rect x="516.5" y="175.5" width="8" height="24" fill="#FFFFFF" stroke="#2F6F33" stroke-width="1"/>
<path d="M520.5 199.5 L520.5 207.5" stroke="#2F6F33" stroke-width="1" fill="none"/>
<circle cx="520.5" cy="207.5" r="2.8" fill="#4A2016"/>
<path d="M480.5 207.5 L672.5 207.5" stroke="#2C1612" stroke-width="1" fill="none"/>
<path d="M480.5 207.5 L480.5 220.5" stroke="#2C1612" stroke-width="1" fill="none"/>
<circle cx="544.5" cy="207.5" r="2.8" fill="#4A2016"/>
<path d="M520.5 207.5 L520.5 215.5" stroke="#2F6F33" stroke-width="1" fill="none"/>
<rect x="516.5" y="215.5" width="8" height="10" fill="none" stroke="#2F6F33"/>
<path d="M544.5 207.5 L544.5 220.5" stroke="#2F6F33" stroke-width="1" fill="none"/>
<path d="M672.5 207.5 L672.5 215.5" stroke="#2C1612" stroke-width="1" fill="none"/>
<path d="M672.5 215.5 L712.5 215.5" stroke="#2C1612" stroke-width="1" fill="none"/>
<circle cx="712.5" cy="215.5" r="2.8" fill="#4A2016"/>
<rect x="720.5" y="211.5" width="24" height="8" fill="#FFFFFF" stroke="#2F6F33" stroke-width="1"/>
<path d="M712.5 215.5 L720.5 215.5" stroke="#2F6F33" stroke-width="1" fill="none"/>
<path d="M744.5 215.5 L768.5 215.5" stroke="#2F6F33" stroke-width="1" fill="none"/>
<circle cx="752.5" cy="215.5" r="2.8" fill="#4A2016"/>
<path d="M768.5 205.5 L768.5 225.5" stroke="#2F6F33" stroke-width="2.6" fill="none"/>
<path d="M768.5 210.5 L784.5 200.5" stroke="#2F6F33" stroke-width="1" fill="none"/>
<path d="M784.5 200.5 L784.5 192.5" stroke="#2F6F33" stroke-width="1" fill="none"/>
<path d="M783.0 189.5h3M783.0 191.5h3" stroke="#6A3020" stroke-width="1"/>
<path d="M784.5 188.5 L784.5 167.5" stroke="#2C1612" stroke-width="1" fill="none"/>
<circle cx="784.5" cy="167.5" r="2.8" fill="#4A2016"/>
<path d="M773 207L779 201.5L781.5 205.5z" fill="#2F6F33"/>
<path d="M768.5 220.5 L784.5 230.5" stroke="#2F6F33" stroke-width="1" fill="none"/>
<path d="M784.5 230.5 L784.5 236.5" stroke="#2F6F33" stroke-width="1" fill="none"/>
<path d="M783.0 236.5h3M783.0 238.5h3" stroke="#6A3020" stroke-width="1"/>
<path d="M712.5 215.5 L712.5 227.5" stroke="#2F6F33" stroke-width="1" fill="none"/>
<path d="M704.5 227.5h16l-8 15.5z" fill="none" stroke="#2F6F33"/>
<path d="M704.5 243.5 L720.5 243.5" stroke="#2F6F33" stroke-width="1" fill="none"/>
<path d="M712.5 243.5 L712.5 255.5" stroke="#2F6F33" stroke-width="1" fill="none"/>
<path d="M712.5 255.5 L752.5 255.5" stroke="#2C1612" stroke-width="1" fill="none"/>
<circle cx="752.5" cy="255.5" r="2.8" fill="#4A2016"/>
<rect x="748.5" y="223.5" width="8" height="24" fill="#FFFFFF" stroke="#2F6F33" stroke-width="1"/>
<path d="M752.5 215.5 L752.5 223.5" stroke="#2F6F33" stroke-width="1" fill="none"/>
<path d="M752.5 247.5 L752.5 255.5" stroke="#2F6F33" stroke-width="1" fill="none"/>
<path d="M752.5 255.5 L752.5 263.5" stroke="#2F6F33" stroke-width="1" fill="none"/>
<rect x="748.5" y="263.5" width="8" height="24" fill="#FFFFFF" stroke="#2F6F33" stroke-width="1"/>
<path d="M752.5 287.5 L752.5 294.5" stroke="#2F6F33" stroke-width="1" fill="none"/>
<path d="M751.0 294.5h3M751.0 296.5h3" stroke="#6A3020" stroke-width="1"/>
<path d="M752.5 297.5 L752.5 383.5" stroke="#2C1612" stroke-width="1" fill="none"/>
<path d="M840.5 167.5 L840.5 230.5" stroke="#2C1612" stroke-width="1" fill="none"/>
<path d="M839.0 230.5h3M839.0 232.5h3" stroke="#6A3020" stroke-width="1"/>
<path d="M840.5 233V243M840.5 254V270" stroke="#000" stroke-width="1.2"/>
<path d="M832 243.5h17M832 250.5h17" stroke="#000" stroke-width="1.3"/><path d="M835 247h11M835 253.5h11" stroke="#000" stroke-width="2.4"/>
<path d="M839.0 270.5h3M839.0 272.5h3" stroke="#6A3020" stroke-width="1"/>
<path d="M840.5 273.5 L840.5 445.5" stroke="#2C1612" stroke-width="1" fill="none"/>
<path d="M845 233.5h6M848 230.5v6" stroke="#000" stroke-width="1.2"/>
<path d="M664.5 351.5 L840.5 351.5" stroke="#2C1612" stroke-width="1" fill="none"/>
<circle cx="672.5" cy="351.5" r="2.8" fill="#4A2016"/>
<circle cx="712.5" cy="351.5" r="2.8" fill="#4A2016"/>
<circle cx="840.5" cy="351.5" r="2.8" fill="#4A2016"/>
<path d="M675.5 327.5h35l-10 12h-15z" fill="none" stroke="#2F6F33"/>
<rect x="684.5" y="339.5" width="16" height="6" fill="none" stroke="#2F6F33"/>
<path d="M690.5 346.5 L690.5 351.5" stroke="#2F6F33" stroke-width="1" fill="none"/>
<path d="M694.5 346.5 L694.5 351.5" stroke="#2F6F33" stroke-width="1" fill="none"/>
<path d="M672.5 351.5 L672.5 375.5" stroke="#2C1612" stroke-width="1" fill="none"/>
<path d="M672.5 375.5 L688.5 375.5" stroke="#2F6F33" stroke-width="1" fill="none"/>
<path d="M671.0 374.0l3 3M674.0 374.0l-3 3" stroke="#6A3020" stroke-width="1"/>
<path d="M688.5 367.5 L688.5 383.5" stroke="#2F6F33" stroke-width="1.6" fill="none"/>
<path d="M696.5 367.5 L696.5 383.5" stroke="#2F6F33" stroke-width="1.6" fill="none"/>
<path d="M696.5 375.5 L712.5 375.5" stroke="#2F6F33" stroke-width="1" fill="none"/>
<path d="M711.0 374.0l3 3M714.0 374.0l-3 3" stroke="#6A3020" stroke-width="1"/>
<path d="M712.5 375.5 L712.5 351.5" stroke="#2C1612" stroke-width="1" fill="none"/>
<path d="M664.5 383.5 L792.5 383.5" stroke="#2C1612" stroke-width="1" fill="none"/>
<circle cx="752.5" cy="383.5" r="2.8" fill="#4A2016"/>
<circle cx="840.5" cy="383.5" r="2.8" fill="#4A2016"/>
<path d="M840.5 383.5 L872.5 383.5" stroke="#2C1612" stroke-width="1" fill="none"/>
<path d="M872.5 383.5 L872.5 393.5" stroke="#2C1612" stroke-width="1" fill="none"/>
<path d="M871.0 392.5h3M871.0 394.5h3" stroke="#6A3020" stroke-width="1"/>
<path d="M872.5 395.5 L872.5 399.5" stroke="#2F6F33" stroke-width="1" fill="none"/>
<path d="M864.5 399.5 L880.5 399.5" stroke="#2F6F33" stroke-width="1" fill="none"/>
<path d="M868.5 403.5 L876.5 403.5" stroke="#2F6F33" stroke-width="1" fill="none"/>
<path d="M872.5 407.5 L872.5 407.5" stroke="#2F6F33" stroke-width="1" fill="none"/>
<path d="M792.5 383.5 L792.5 413.5" stroke="#2C1612" stroke-width="1" fill="none"/>
<path d="M791.0 414.5h3M791.0 416.5h3" stroke="#6A3020" stroke-width="1"/>
<path d="M792.5 417.5 L792.5 425.5" stroke="#2F6F33" stroke-width="1" fill="none"/>
<path d="M792.5 425.5 L776.5 434.5" stroke="#2F6F33" stroke-width="1" fill="none"/>
<path d="M781 431.5L787 425.5L789.5 429.5z" fill="#2F6F33"/>
<path d="M776.5 429.5 L776.5 449.5" stroke="#2F6F33" stroke-width="2.6" fill="none"/>
<path d="M776.5 445.5 L792.5 455.5" stroke="#2F6F33" stroke-width="1" fill="none"/>
<path d="M792.5 455.5 L792.5 461.5" stroke="#2F6F33" stroke-width="1" fill="none"/>
<path d="M791.0 462.5h3M791.0 464.5h3" stroke="#6A3020" stroke-width="1"/>
<path d="M792.5 465.5 L792.5 663.5" stroke="#2C1612" stroke-width="1" fill="none"/>
<path d="M664.5 439.5 L720.5 439.5" stroke="#2C1612" stroke-width="1" fill="none"/>
<circle cx="720.5" cy="439.5" r="2.8" fill="#4A2016"/>
<rect x="728.5" y="435.5" width="24" height="8" fill="#FFFFFF" stroke="#2F6F33" stroke-width="1"/>
<path d="M720.5 439.5 L728.5 439.5" stroke="#2F6F33" stroke-width="1" fill="none"/>
<path d="M752.5 439.5 L776.5 439.5" stroke="#2F6F33" stroke-width="1" fill="none"/>
<circle cx="760.5" cy="439.5" r="2.8" fill="#4A2016"/>
<path d="M760.5 439.5 L760.5 447.5" stroke="#2F6F33" stroke-width="1" fill="none"/>
<rect x="756.5" y="447.5" width="8" height="24" fill="#FFFFFF" stroke="#2F6F33" stroke-width="1"/>
<path d="M760.5 471.5 L760.5 479.5" stroke="#2F6F33" stroke-width="1" fill="none"/>
<circle cx="760.5" cy="479.5" r="2.8" fill="#4A2016"/>
<path d="M720.5 439.5 L720.5 451.5" stroke="#2F6F33" stroke-width="1" fill="none"/>
<path d="M712.5 451.5h16l-8 15.5z" fill="none" stroke="#2F6F33"/>
<path d="M712.5 467.5 L728.5 467.5" stroke="#2F6F33" stroke-width="1" fill="none"/>
<path d="M720.5 467.5 L720.5 479.5" stroke="#2F6F33" stroke-width="1" fill="none"/>
<path d="M720.5 479.5 L760.5 479.5" stroke="#2C1612" stroke-width="1" fill="none"/>
<path d="M760.5 479.5 L760.5 487.5" stroke="#2F6F33" stroke-width="1" fill="none"/>
<rect x="756.5" y="487.5" width="8" height="24" fill="#FFFFFF" stroke="#2F6F33" stroke-width="1"/>
<path d="M760.5 511.5 L760.5 517.5" stroke="#2F6F33" stroke-width="1" fill="none"/>
<path d="M759.0 518.5h3M759.0 520.5h3" stroke="#6A3020" stroke-width="1"/>
<path d="M760.5 521.5 L760.5 607.5" stroke="#2C1612" stroke-width="1" fill="none"/>
<circle cx="760.5" cy="607.5" r="2.8" fill="#4A2016"/>
<path d="M839.0 446.5h3M839.0 448.5h3" stroke="#6A3020" stroke-width="1"/>
<path d="M840.5 449V459M840.5 470V486" stroke="#000" stroke-width="1.2"/>
<path d="M832 459.5h17M832 466.5h17" stroke="#000" stroke-width="1.3"/><path d="M835 463h11M835 469.5h11" stroke="#000" stroke-width="2.4"/>
<path d="M839.0 486.5h3M839.0 488.5h3" stroke="#6A3020" stroke-width="1"/>
<path d="M840.5 489.5 L840.5 607.5" stroke="#2C1612" stroke-width="1" fill="none"/>
<path d="M845 449.5h6M848 446.5v6" stroke="#000" stroke-width="1.2"/>
<path d="M544.5 607.5 L840.5 607.5" stroke="#2C1612" stroke-width="1" fill="none"/>
<path d="M608.5 592.5 L608.5 631.5" stroke="#2C1612" stroke-width="1" fill="none"/>
<path d="M544.5 631.5 L608.5 631.5" stroke="#2C1612" stroke-width="1" fill="none"/>
<path d="M632.5 592.5 L632.5 647.5" stroke="#2C1612" stroke-width="1" fill="none"/>
<path d="M544.5 647.5 L632.5 647.5" stroke="#2C1612" stroke-width="1" fill="none"/>
<path d="M544.5 663.5 L792.5 663.5" stroke="#2C1612" stroke-width="1" fill="none"/>
<path d="M664.5 559.5 L671.5 559.5" stroke="#2C1612" stroke-width="1" fill="none"/>
<path d="M671.5 558.0v3M673.5 558.0v3" stroke="#6A3020" stroke-width="1"/>
<path d="M674.5 559.5 L680.5 559.5" stroke="#2F6F33" stroke-width="1" fill="none"/>
<rect x="680.5" y="555.5" width="25" height="8" fill="#FFFFFF" stroke="#2F6F33" stroke-width="1"/>
<path d="M705.5 559.5 L712.5 559.5" stroke="#2F6F33" stroke-width="1" fill="none"/>
<path d="M711.5 558.0v3M713.5 558.0v3" stroke="#6A3020" stroke-width="1"/>
<path d="M712.5 559.5 L712.5 567.5" stroke="#2F6F33" stroke-width="1" fill="none"/>
<path d="M704.5 567.5 L721.5 567.5" stroke="#2F6F33" stroke-width="1" fill="none"/>
<path d="M708.5 571.5 L717.5 571.5" stroke="#2F6F33" stroke-width="1" fill="none"/>
<rect x="712" y="575" width="1" height="1" fill="#2F6F33"/>
<path d="M47.0 430.0l3 3M50.0 430.0l-3 3" stroke="#6A3020" stroke-width="1"/>
<path d="M48.5 431.5 L56.5 431.5" stroke="#2F6F33" stroke-width="1" fill="none"/>
<rect x="56.5" y="427.5" width="24" height="8" fill="#FFFFFF" stroke="#2F6F33" stroke-width="1"/>
<path d="M80.5 431.5 L87.5 431.5" stroke="#2F6F33" stroke-width="1" fill="none"/>
<path d="M88.5 430.0v3M90.5 430.0v3" stroke="#6A3020" stroke-width="1"/>
<path d="M91.5 431.5 L112.5 431.5" stroke="#2C1612" stroke-width="1" fill="none"/>
<circle cx="112.5" cy="431.5" r="2.8" fill="#4A2016"/>
<path d="M48.5 431.5 L48.5 447.5" stroke="#2C1612" stroke-width="1" fill="none"/>
<path d="M48.5 447.5 L88.5 447.5" stroke="#2C1612" stroke-width="1" fill="none"/>
<path d="M88.5 447.5 L88.5 463.5" stroke="#2C1612" stroke-width="1" fill="none"/>
<path d="M87.0 462.0l3 3M90.0 462.0l-3 3" stroke="#6A3020" stroke-width="1"/>
<path d="M64.5 455.5 L64.5 471.5" stroke="#2F6F33" stroke-width="1.6" fill="none"/>
<path d="M72.5 455.5 L72.5 471.5" stroke="#2F6F33" stroke-width="1.6" fill="none"/>
<path d="M72.5 463.5 L87.5 463.5" stroke="#2F6F33" stroke-width="1" fill="none"/>
<path d="M16.5 463.5 L48.5 463.5" stroke="#2C1612" stroke-width="1" fill="none"/>
<path d="M15.0 462.0l3 3M18.0 462.0l-3 3" stroke="#6A3020" stroke-width="1"/>
<circle cx="48.5" cy="463.5" r="2.8" fill="#4A2016"/>
<path d="M48.5 463.5 L64.5 463.5" stroke="#2F6F33" stroke-width="1" fill="none"/>
<path d="M16.5 463.5 L16.5 469.5" stroke="#2F6F33" stroke-width="1" fill="none"/>
<circle cx="16.5" cy="481" r="11" fill="none" stroke="#2F6F33"/>
<path d="M21 467.5h6M24 464.5v6" stroke="#2F6F33" stroke-width="1.2"/>
<path d="M48.5 463.5 L48.5 471.5" stroke="#2F6F33" stroke-width="1" fill="none"/>
<rect x="44.5" y="471.5" width="9" height="14" fill="none" stroke="#2F6F33"/>
<path d="M112.5 367.5 L116.5 367.5" stroke="#2C1612" stroke-width="1" fill="none"/>
<path d="M112.5 367.5 L112.5 373.5" stroke="#2C1612" stroke-width="1" fill="none"/>
<path d="M111.0 374.5h3M111.0 376.5h3" stroke="#6A3020" stroke-width="1"/>
<path d="M112.5 377.5 L112.5 383.5" stroke="#2F6F33" stroke-width="1" fill="none"/>
<path d="M104.5 383.5 L120.5 383.5" stroke="#2F6F33" stroke-width="1" fill="none"/>
<path d="M108.5 387.5 L120.5 387.5" stroke="#2F6F33" stroke-width="1" fill="none"/>
<path d="M112.5 399.5 L116.5 399.5" stroke="#2C1612" stroke-width="1" fill="none"/>
<path d="M112.5 399.5 L112.5 431.5" stroke="#2C1612" stroke-width="1" fill="none"/>
<path d="M111.0 439.5h3M111.0 441.5h3" stroke="#6A3020" stroke-width="1"/>
<path d="M112.5 442.5 L112.5 447.5" stroke="#2F6F33" stroke-width="1" fill="none"/>
<rect x="108.5" y="447.5" width="8" height="24" fill="#FFFFFF" stroke="#2F6F33" stroke-width="1"/>
<path d="M112.5 471.5 L112.5 478.5" stroke="#2F6F33" stroke-width="1" fill="none"/>
<text x="450" y="195" font-size="11" fill="#2F7476" textLength="46" lengthAdjust="spacingAndGlyphs">T5 BD238</text>
<text x="686" y="203" font-size="11" fill="#2F7476" textLength="35" lengthAdjust="spacingAndGlyphs">R26 75</text>
<text x="782" y="222" font-size="11" fill="#2F7476" textLength="47" lengthAdjust="spacingAndGlyphs">T9 BC212</text>
<text x="852" y="250" font-size="11" fill="#2F7476" textLength="28" lengthAdjust="spacingAndGlyphs">V1 35</text>
<text x="675" y="314" font-size="11" fill="#2F7476" textLength="30" lengthAdjust="spacingAndGlyphs">SP1 8</text>
<text x="680" y="362" font-size="11" fill="#2F7476" textLength="33" lengthAdjust="spacingAndGlyphs">C13 1u</text>
<text x="695" y="427" font-size="11" fill="#2F7476" textLength="35" lengthAdjust="spacingAndGlyphs">R29 75</text>
<text x="790" y="446" font-size="11" fill="#2F7476" textLength="52" lengthAdjust="spacingAndGlyphs">T10 BC212</text>
<text x="852" y="466" font-size="11" fill="#2F7476" textLength="28" lengthAdjust="spacingAndGlyphs">V2 35</text>
<text x="685.5" y="544" font-size="11" fill="#2F7476" textLength="33" lengthAdjust="spacingAndGlyphs">R25 10</text>
<text x="660.5" y="545.5" font-size="11" fill="#2F7476" textLength="19" lengthAdjust="spacingAndGlyphs">100n</text>
<text x="9" y="454" font-size="11" fill="#2F7476" textLength="24" lengthAdjust="spacingAndGlyphs">VG1</text>
<text x="56" y="422" font-size="11" fill="#2F7476" textLength="42" lengthAdjust="spacingAndGlyphs">R19 22k</text>
<text x="56" y="451" font-size="11" fill="#2F7476" textLength="30" lengthAdjust="spacingAndGlyphs">C7 1u</text>
<text x="104" y="282" font-size="11" fill="#2F7476" textLength="14" lengthAdjust="spacingAndGlyphs">Z2</text>
<text transform="translate(125.5 235) rotate(-90)" x="0" y="0" font-size="11" fill="#2F7476" textLength="48" lengthAdjust="spacingAndGlyphs">R33 3,2k</text>
<text transform="translate(194.5 229) rotate(-90)" x="0" y="0" font-size="11" fill="#2F7476" textLength="48" lengthAdjust="spacingAndGlyphs">R34 3,2k</text>
<text transform="translate(273 210) rotate(-90)" x="0" y="0" font-size="11" fill="#2F7476" textLength="35" lengthAdjust="spacingAndGlyphs">R2 560</text>
<text transform="translate(329 210) rotate(-90)" x="0" y="0" font-size="11" fill="#2F7476" textLength="35" lengthAdjust="spacingAndGlyphs">R1 100</text>
<text transform="translate(385 213) rotate(-90)" x="0" y="0" font-size="11" fill="#2F7476" textLength="37" lengthAdjust="spacingAndGlyphs">R7 3,3k</text>
<text transform="translate(417 210) rotate(-90)" x="0" y="0" font-size="11" fill="#2F7476" textLength="35" lengthAdjust="spacingAndGlyphs">R6 270</text>
<text transform="translate(537.5 213) rotate(-90)" x="0" y="0" font-size="11" fill="#2F7476" textLength="38" lengthAdjust="spacingAndGlyphs">R5 91m</text>
<text transform="translate(562.5 247) rotate(-90)" x="0" y="0" font-size="11" fill="#2F7476" textLength="38" lengthAdjust="spacingAndGlyphs">C8 10u</text>
<text transform="translate(693 277) rotate(-90)" x="0" y="0" font-size="11" fill="#2F7476" textLength="55" lengthAdjust="spacingAndGlyphs">D3 1N1183</text>
<text transform="translate(770 260) rotate(-90)" x="0" y="0" font-size="11" fill="#2F7476" textLength="37" lengthAdjust="spacingAndGlyphs">R27 22</text>
<text transform="translate(738.5 314) rotate(-90)" x="0" y="0" font-size="11" fill="#2F7476" textLength="44" lengthAdjust="spacingAndGlyphs">R28 8,2k</text>
<text transform="translate(701.5 502) rotate(-90)" x="0" y="0" font-size="11" fill="#2F7476" textLength="55" lengthAdjust="spacingAndGlyphs">D4 1N1183</text>
<text transform="translate(778 487) rotate(-90)" x="0" y="0" font-size="11" fill="#2F7476" textLength="35" lengthAdjust="spacingAndGlyphs">R30 22</text>
<text transform="translate(746.5 538) rotate(-90)" x="0" y="0" font-size="11" fill="#2F7476" textLength="43" lengthAdjust="spacingAndGlyphs">R31 8,2k</text>
</g></g></svg>
<!-- scroll -->
<!-- vertical scrollbar -->
<div class="a" style="left:1007px;top:135px;width:17px;height:538px;background:linear-gradient(90deg,#F3F1EC,#FEFEFB)"></div>
<div class="a" style="left:1008px;top:136px;width:15px;height:15px;border-radius:2px;background:#C3D3FD;border:1px solid #FFFFFF;box-shadow:0 0 0 0 #B8C8F0"></div>
<svg style="left:1008px;top:136px" width="15" height="15"><path d="M4 9.5L7.5 6L11 9.5" stroke="#4D6185" stroke-width="2" fill="none"/></svg>
<div class="a" style="left:1008px;top:152px;width:15px;height:27px;border-radius:2px;background:#C3D3FD;border:1px solid #FFFFFF"></div>
<svg style="left:1011px;top:160px" width="9" height="9"><path d="M1 1.5h7M1 3.5h7M1 5.5h7M1 7.5h7" stroke="#EEF4FE" stroke-width="1"/><path d="M2 2.5h7M2 4.5h7M2 6.5h7M2 8.5h7" stroke="#8CB0F8" stroke-width="1"/></svg>
<div class="a" style="left:1008px;top:657px;width:15px;height:15px;border-radius:2px;background:#C3D3FD;border:1px solid #FFFFFF"></div>
<svg style="left:1008px;top:657px" width="15" height="15"><path d="M4 5.5L7.5 9L11 5.5" stroke="#4D6185" stroke-width="2" fill="none"/></svg>

<!-- horizontal scrollbar -->
<div class="a" style="left:0;top:673px;width:1008px;height:17px;background:linear-gradient(#F3F1EC,#FEFEFB)"></div>
<div class="a" style="left:1px;top:675px;width:15px;height:15px;border-radius:2px;background:#C3D3FD;border:1px solid #FFFFFF"></div>
<svg style="left:1px;top:675px" width="15" height="15"><path d="M9.5 4L6 7.5L9.5 11" stroke="#4D6185" stroke-width="2" fill="none"/></svg>
<div class="a" style="left:18px;top:675px;width:96px;height:15px;border-radius:2px;background:#C3D3FD;border:1px solid #FFFFFF"></div><svg style="left:62px;top:679px" width="9" height="9"><path d="M1.5 1v7M3.5 1v7M5.5 1v7M7.5 1v7" stroke="#EEF4FE"/><path d="M2.5 2v7M4.5 2v7M6.5 2v7M8.5 2v7" stroke="#8CB0F8"/></svg>
<div class="a" style="left:991px;top:675px;width:15px;height:15px;border-radius:2px;background:#C3D3FD;border:1px solid #FFFFFF"></div>
<svg style="left:991px;top:675px" width="15" height="15"><path d="M6 4L9.5 7.5L6 11" stroke="#4D6185" stroke-width="2" fill="none"/></svg>

<!-- bottom tabs -->
<div class="a" style="left:0;top:690px;width:1024px;height:43px;background:#ECE9D8"></div>
<div class="tb" style="left:4px;top:690px;width:192px;height:16px;"></div>
<svg style="left:8px;top:690px" width="190" height="16"><text x="0" y="12" font-family="Liberation Sans" font-size="11.5" textLength="183" lengthAdjust="spacingAndGlyphs">200W-minimalveg-FET-belső hurokban</text></svg>
<div class="a" style="left:196px;top:689px;width:56px;height:18px;background:#F6F5F0;border:1px solid;border-color:#FFFFFF #716F64 #716F64 #FFFFFF"></div>
<div class="t" style="left:203px;top:692px;font-size:11px">quad405</div>
<div class="tb" style="left:252px;top:690px;width:82px;height:16px;"></div>
<div class="t" style="left:257px;top:692px;font-size:11px">quad405 200w</div>
<div class="a" style="left:0;top:707px;width:1024px;height:1px;background:#ACA899"></div>
<div class="a" style="left:0;top:708px;width:1024px;height:1px;background:#FFFFFF"></div>


<!-- status -->
<div class="a" style="left:0px;top:709px;width:1024px;height:24px;background:#ECE9D8"></div>
<div class="a" style="left:4px;top:711px;width:24px;height:19px;background:#ECE9D8;border:1px solid;border-color:#716F64 #FFFFFF #FFFFFF #716F64;box-shadow:inset 1px 1px 0 #ACA899"></div>
<svg style="left:4px;top:711px" width="24" height="19"><circle cx="11" cy="10" r="6" fill="none" stroke="#000" stroke-width="1.2"/><path d="M3 10h6M9 6v8M9 8l5-4M9 12l5 4M16 3v4M16 14v4" stroke="#000" stroke-width="1.3" fill="none"/><rect x="18" y="6" width="3" height="8" fill="#000"/><path d="M19.5 3v3M19.5 14v3" stroke="#000"/></svg>
<div class="a" style="left:34px;top:712px;width:25px;height:17px;background:#C8C8C0"></div>
<svg style="left:34px;top:711px" width="25" height="19"><path d="M2 3h3v13H2M5 16h20M22 0v19" stroke="#000" stroke-width="1" fill="none"/><circle cx="5" cy="9.5" r="1.5" fill="none" stroke="#000" stroke-width="0.8"/><path d="M6 9.5c2-5 4-5 5 0s4 5 5 0 4-5 6 0" stroke="#D02020" stroke-width="1" fill="none"/></svg>
<svg style="left:61px;top:711px" width="25" height="19"><path d="M1 19V1h23" stroke="#000" stroke-width="1" fill="none"/><rect x="3.5" y="3.5" width="20" height="14" rx="2" fill="#0A7A18" stroke="#000" stroke-width="1"/><path d="M5 9.5Q7.5 4 10 9.5T15 9.5T20 9.5T23 8" stroke="#60F060" stroke-width="1" fill="none"/><path d="M5 15l2-2 2 2 2-2 2 2 2-2 2 2 2-2 2 2" stroke="#E0FFE0" stroke-width="0.9" fill="none"/></svg>
<div class="a" style="left:89px;top:711px;width:25px;height:19px;background:#ECE9D8;border:1px solid;border-color:#FFFFFF #716F64 #716F64 #FFFFFF;box-shadow:inset -1px -1px 0 #ACA899"></div>
<div class="t" style="left:89px;top:715px;width:25px;text-align:center;font-size:11.5px;color:#000;">Exit</div>
<div class="a" style="left:119px;top:711px;width:803px;height:20px;border:1px solid;border-color:#ACA899 #FFFFFF #FFFFFF #ACA899"></div>
<div class="a" style="left:923px;top:710px;width:99px;height:21px;border:1px solid;border-color:#ACA899 #FFFFFF #FFFFFF #ACA899"></div>
<div class="t" style="left:927px;top:715px;font-size:12px;color:#000;">X: 606&nbsp;&nbsp;Y: 253</div>
<!-- fg -->
<div class="a" style="left:-3px;top:481px;width:548px;height:195px;background:#6A7ED0;border-radius:7px 7px 0 0"></div>
<div class="a" style="left:-3px;top:481px;width:548px;height:29px;background:linear-gradient(#B4CBF4 0,#9DB9EB 3px,#94AFEA 14px,#9AB3EA 24px,#8CA8E6 29px);border-radius:7px 7px 0 0"></div>
<div class="a" style="left:1px;top:510px;width:540px;height:162px;background:#ECE9D8"></div>
<svg style="left:3px;top:488px" width="16" height="16"><rect x="0" y="0" width="16" height="7" fill="#D4D4DC"/><path d="M1 1.5l3 3M1 5l5-4M3 3h4" stroke="#222" stroke-width="1.3"/><ellipse cx="11.5" cy="3.8" rx="3.6" ry="2.9" fill="#F4F000" stroke="#2A2A00" stroke-width="0.9"/><rect x="0" y="8" width="16" height="8" fill="#1C2470"/><rect x="1" y="9" width="8" height="6" fill="#F4F4FF"/><path d="M1 12h8M3.5 9v6M6.5 9v6" stroke="#4050A0" stroke-width="0.9"/><rect x="10" y="9" width="5" height="6" fill="#9AA0C0"/><path d="M10 12h5M12.5 9v6" stroke="#505A90" stroke-width="0.8"/></svg>
<svg style="left:23px;top:488px" width="200" height="18"><text x="0.5" y="14" font-family="Liberation Sans" font-size="14.5" fill="#DCE6F8" stroke="#DCE6F8" stroke-width="0.55" textLength="117" lengthAdjust="spacingAndGlyphs">Function Generator</text></svg>
<div class="a" style="left:13px;top:524px;width:92px;height:54px;border:1px solid #ACA899;box-shadow:inset 1px 1px 0 #FFFFFF, 1px 1px 0 #FFFFFF"></div>
<div class="t" style="left:21px;top:519px;font-size:12px;font-weight:bold;background:#ECE9D8;padding:0 1px;line-height:13px">Control</div>
<div class="a" style="left:25px;top:542px;width:35px;height:21px;background:#F7F6F1;border:1px solid;border-color:#716F64 #FFFFFF #FFFFFF #716F64;box-shadow:inset 1px 1px 0 #ACA899"></div>
<div class="t" style="left:25px;top:548px;width:35px;text-align:center;font-size:12px;font-weight:bold;color:#000;">Start</div>
<div class="a" style="left:60px;top:542px;width:35px;height:21px;background:#ECE9D8;border:1px solid;border-color:#FFFFFF #716F64 #716F64 #FFFFFF;box-shadow:inset -1px -1px 0 #ACA899"></div>
<div class="t" style="left:60px;top:547px;width:35px;text-align:center;font-size:12px;font-weight:bold;color:#000;">Stop</div>
<div class="a" style="left:113px;top:524px;width:87px;height:54px;border:1px solid #ACA899;box-shadow:inset 1px 1px 0 #FFFFFF, 1px 1px 0 #FFFFFF"></div>
<div class="a" style="left:13px;top:588px;width:192px;height:73px;border:1px solid #ACA899;box-shadow:inset 1px 1px 0 #FFFFFF, 1px 1px 0 #FFFFFF"></div>
<div class="t" style="left:20px;top:583px;font-size:12px;font-weight:bold;background:#ECE9D8;padding:0 1px;line-height:13px">Waveform</div>
<div class="a" style="left:24px;top:610px;width:33px;height:32px;background:#ECE9D8;border:1px solid;border-color:#FFFFFF #716F64 #716F64 #FFFFFF;box-shadow:inset -1px -1px 0 #ACA899"></div>
<svg style="left:24px;top:610px" width="33" height="32"><path d="M4 17c0-9 12-9 12 0s12 9 12 0" stroke="#000" stroke-width="1.2" fill="none"/></svg>
<div class="a" style="left:58px;top:610px;width:33px;height:32px;background:#ECE9D8;border:1px solid;border-color:#FFFFFF #716F64 #716F64 #FFFFFF;box-shadow:inset -1px -1px 0 #ACA899"></div>
<svg style="left:58px;top:610px" width="33" height="32"><path d="M4 19l8-8 12 12 6-6" stroke="#000" stroke-width="1.2" fill="none"/></svg>
<div class="a" style="left:92px;top:610px;width:33px;height:32px;background:#F7F6F1;border:1px solid;border-color:#716F64 #FFFFFF #FFFFFF #716F64;box-shadow:inset 1px 1px 0 #ACA899"></div>
<svg style="left:92px;top:610px" width="33" height="32"><path d="M5 13H16.5V24.5H29V18" stroke="#000" stroke-width="1.5" fill="none"/></svg>
<div class="a" style="left:126px;top:610px;width:33px;height:32px;background:#ECE9D8;border:1px solid;border-color:#FFFFFF #716F64 #716F64 #FFFFFF;box-shadow:inset -1px -1px 0 #ACA899"></div>
<div class="t" style="left:126px;top:620px;width:33px;text-align:center;font-size:13px;font-weight:bold;color:#000;">DC</div>
<div class="a" style="left:160px;top:610px;width:33px;height:32px;background:#ECE9D8;border:1px solid;border-color:#FFFFFF #716F64 #716F64 #FFFFFF;box-shadow:inset -1px -1px 0 #ACA899"></div>
<div class="t" style="left:160px;top:620px;width:33px;text-align:center;font-size:13px;font-weight:bold;color:#000;">ARB</div>
<div class="a" style="left:213px;top:500px;width:308px;height:161px;border:1px solid #ACA899;box-shadow:inset 1px 1px 0 #FFFFFF, 1px 1px 0 #FFFFFF"></div>
<div class="a" style="left:225px;top:596px;width:168px;height:54px;border:1px solid #ACA899;box-shadow:inset 1px 1px 0 #FFFFFF, 1px 1px 0 #FFFFFF"></div>
<div class="t" style="left:232px;top:591px;font-size:12px;font-weight:bold;background:#ECE9D8;padding:0 1px;line-height:13px">Sweep</div>
<div class="a" style="left:237px;top:606px;width:69px;height:17px;background:#ECE9D8;border:1px solid;border-color:#FFFFFF #716F64 #716F64 #FFFFFF;box-shadow:inset -1px -1px 0 #ACA899"></div>
<div class="t" style="left:237px;top:609px;width:69px;text-align:center;font-size:12px;font-weight:bold;color:#000;">On</div>
<div class="a" style="left:309px;top:606px;width:34px;height:17px;background:#ECE9D8;border:1px solid;border-color:#FFFFFF #716F64 #716F64 #FFFFFF;box-shadow:inset -1px -1px 0 #ACA899"></div>
<div class="t" style="left:309px;top:609px;width:34px;text-align:center;font-size:12px;font-weight:bold;color:#000;">Cont</div>
<div class="a" style="left:345px;top:606px;width:33px;height:17px;background:#ECE9D8;border:1px solid;border-color:#FFFFFF #716F64 #716F64 #FFFFFF;box-shadow:inset -1px -1px 0 #ACA899"></div>
<div class="t" style="left:345px;top:609px;width:33px;text-align:center;font-size:12px;font-weight:bold;color:#000;">Lin</div>
<div class="a" style="left:237px;top:625px;width:34px;height:18px;background:#ECE9D8;border:1px solid;border-color:#FFFFFF #716F64 #716F64 #FFFFFF;box-shadow:inset -1px -1px 0 #ACA899"></div>
<div class="t" style="left:237px;top:629px;width:34px;text-align:center;font-size:12px;font-weight:bold;color:#000;">Start</div>
<div class="a" style="left:273px;top:625px;width:33px;height:18px;background:#ECE9D8;border:1px solid;border-color:#FFFFFF #716F64 #716F64 #FFFFFF;box-shadow:inset -1px -1px 0 #ACA899"></div>
<div class="t" style="left:273px;top:629px;width:33px;text-align:center;font-size:12px;font-weight:bold;color:#000;">Stop</div>
<div class="a" style="left:309px;top:625px;width:34px;height:18px;background:#ECE9D8;border:1px solid;border-color:#FFFFFF #716F64 #716F64 #FFFFFF;box-shadow:inset -1px -1px 0 #ACA899"></div>
<div class="t" style="left:309px;top:629px;width:34px;text-align:center;font-size:12px;font-weight:bold;color:#000;">Time</div>
<div class="a" style="left:345px;top:625px;width:33px;height:18px;background:#ECE9D8;border:1px solid;border-color:#FFFFFF #716F64 #716F64 #FFFFFF;box-shadow:inset -1px -1px 0 #ACA899"></div>
<div class="t" style="left:345px;top:629px;width:33px;text-align:center;font-size:12px;font-weight:bold;color:#000;">Num</div>
<div class="a" style="left:405px;top:595px;width:41px;height:19px;background:#ECE9D8;border:1px solid;border-color:#FFFFFF #716F64 #716F64 #FFFFFF;box-shadow:inset -1px -1px 0 #ACA899"></div>
<div class="t" style="left:405px;top:599px;width:41px;text-align:center;font-size:12px;font-weight:bold;color:#000;">Offset</div>
<div class="a" style="left:450px;top:595px;width:58px;height:19px;background:#080808;border:1px solid;border-color:#716F64 #FFFFFF #FFFFFF #716F64"></div>
<div class="t" style="left:453px;top:599px;font-size:11px;color:#50C850;">0V</div>
<div class="a" style="left:405px;top:622px;width:41px;height:20px;background:#ECE9D8;border:1px solid;border-color:#FFFFFF #716F64 #716F64 #FFFFFF;box-shadow:inset -1px -1px 0 #ACA899"></div>
<div class="a" style="left:450px;top:622px;width:58px;height:20px;background:#080808;border:1px solid;border-color:#716F64 #FFFFFF #FFFFFF #716F64"></div>
<!-- osc -->
<div class="a" style="left:116px;top:218px;width:550px;height:375px;background:#0B36C6;border-radius:7px 7px 0 0"></div>
<div class="a" style="left:116px;top:218px;width:550px;height:29px;background:linear-gradient(#1A44B8 0,#3D95FF 1px,#1A70F0 3px,#0058E6 6px,#0052DA 14px,#0056E2 19px,#0064F4 24px,#0058E8 26px,#0038B0 28px,#00288A 29px);border-radius:7px 7px 0 0"></div>
<div class="a" style="left:120px;top:247px;width:542px;height:342px;background:#ECE9D8"></div>
<div class="a" style="left:122px;top:217px;width:538px;height:2px;background:#2050C8;border-radius:2px 2px 0 0"></div>
<div class="a" style="left:120px;top:247px;width:542px;height:1px;background:#FFFFFF"></div>
<svg style="left:122px;top:225px" width="16" height="16"><rect x="0" y="0" width="16" height="7" fill="#D4D4DC"/><path d="M1 1.5l3 3M1 5l5-4M3 3h4" stroke="#222" stroke-width="1.3"/><ellipse cx="11.5" cy="3.8" rx="3.6" ry="2.9" fill="#F4F000" stroke="#2A2A00" stroke-width="0.9"/><rect x="0" y="8" width="16" height="8" fill="#1C2470"/><rect x="1" y="9" width="8" height="6" fill="#F4F4FF"/><path d="M1 12h8M3.5 9v6M6.5 9v6" stroke="#4050A0" stroke-width="0.9"/><rect x="10" y="9" width="5" height="6" fill="#9AA0C0"/><path d="M10 12h5M12.5 9v6" stroke="#505A90" stroke-width="0.8"/></svg>
<svg style="left:142px;top:225px" width="140" height="18"><text x="1.5" y="15" font-family="Liberation Sans" font-size="14.5" fill="#0A2A8A" stroke="#0A2A8A" stroke-width="0.5" textLength="130" lengthAdjust="spacingAndGlyphs" opacity="0.6">Oscilloscope - Virtual</text><text x="0.5" y="14" font-family="Liberation Sans" font-size="14.5" fill="#F4F8FF" stroke="#F4F8FF" stroke-width="0.55" textLength="130" lengthAdjust="spacingAndGlyphs">Oscilloscope - Virtual</text></svg>
<div class="a" style="left:593px;top:223px;width:21px;height:21px;border:1px solid #FFFFFF;border-radius:3px;background:radial-gradient(circle at 30% 30%,#5A8EFA,#2A62EC 55%,#1E50D8)"></div>
<div class="a" style="left:616px;top:223px;width:21px;height:21px;border:1px solid #FFFFFF;border-radius:3px;background:radial-gradient(circle at 30% 30%,#5A8EFA,#2A62EC 55%,#1E50D8)"></div>
<div class="a" style="left:639px;top:223px;width:21px;height:21px;border:1px solid #FFFFFF;border-radius:3px;background:radial-gradient(circle at 30% 30%,#F08860,#E0502A 55%,#C83C18)"></div>
<div class="a" style="left:599px;top:235px;width:7px;height:3px;background:#FFFFFF"></div>
<div class="a" style="left:621px;top:228px;width:11px;height:10px;border:1px solid #FFFFFF;border-top:3px solid #FFFFFF"></div>
<svg style="left:639px;top:223px" width="21" height="21"><path d="M6 6L15 15M15 6L6 15" stroke="#FFFFFF" stroke-width="2.2"/></svg>
<div class="a" style="left:128px;top:255px;width:304px;height:278px;background:#FFFFFF;border:1px solid #ACA899"></div>
<div class="a" style="left:131px;top:258px;width:295px;height:268px;background:#F9FBF8;border-top:4px solid #A8A698;border-left:4px solid #A8A698"></div>
<div class="t" style="left:146px;top:269px;font-size:10px;color:#5A3428">VF1: 10V</div>
<svg style="left:0px;top:0px" width="1024" height="768"><rect x="141.5" y="281.5" width="278" height="205" fill="none" stroke="#A8A8A8" stroke-width="1"/><path d="M169.5 284 V486" stroke="#ACACAC" stroke-dasharray="3 3"/><path d="M197.5 284 V486" stroke="#ACACAC" stroke-dasharray="3 3"/><path d="M224.5 284 V486" stroke="#ACACAC" stroke-dasharray="3 3"/><path d="M252.5 284 V486" stroke="#ACACAC" stroke-dasharray="3 3"/><path d="M280.5 284 V486" stroke="#ACACAC" stroke-dasharray="3 3"/><path d="M279.0 287.5h3" stroke="#ACACAC"/><path d="M279.0 294.5h3" stroke="#ACACAC"/><path d="M279.0 300.5h3" stroke="#ACACAC"/><path d="M279.0 307.5h3" stroke="#ACACAC"/><path d="M279.0 313.5h3" stroke="#ACACAC"/><path d="M279.0 319.5h3" stroke="#ACACAC"/><path d="M279.0 326.5h3" stroke="#ACACAC"/><path d="M279.0 332.5h3" stroke="#ACACAC"/><path d="M279.0 339.5h3" stroke="#ACACAC"/><path d="M279.0 345.5h3" stroke="#ACACAC"/><path d="M279.0 351.5h3" stroke="#ACACAC"/><path d="M279.0 358.5h3" stroke="#ACACAC"/><path d="M279.0 364.5h3" stroke="#ACACAC"/><path d="M279.0 371.5h3" stroke="#ACACAC"/><path d="M279.0 377.5h3" stroke="#ACACAC"/><path d="M279.0 384.5h3" stroke="#ACACAC"/><path d="M279.0 390.5h3" stroke="#ACACAC"/><path d="M279.0 396.5h3" stroke="#ACACAC"/><path d="M279.0 403.5h3" stroke="#ACACAC"/><path d="M279.0 409.5h3" stroke="#ACACAC"/><path d="M279.0 416.5h3" stroke="#ACACAC"/><path d="M279.0 422.5h3" stroke="#ACACAC"/><path d="M279.0 428.5h3" stroke="#ACACAC"/><path d="M279.0 435.5h3" stroke="#ACACAC"/><path d="M279.0 441.5h3" stroke="#ACACAC"/><path d="M279.0 448.5h3" stroke="#ACACAC"/><path d="M279.0 454.5h3" stroke="#ACACAC"/><path d="M279.0 460.5h3" stroke="#ACACAC"/><path d="M279.0 467.5h3" stroke="#ACACAC"/><path d="M279.0 473.5h3" stroke="#ACACAC"/><path d="M279.0 480.5h3" stroke="#ACACAC"/><path d="M308.5 284 V486" stroke="#ACACAC" stroke-dasharray="3 3"/><path d="M336.5 284 V486" stroke="#ACACAC" stroke-dasharray="3 3"/><path d="M363.5 284 V486" stroke="#ACACAC" stroke-dasharray="3 3"/><path d="M391.5 284 V486" stroke="#ACACAC" stroke-dasharray="3 3"/><path d="M144 307.5 H419" stroke="#ACACAC" stroke-dasharray="3 3"/><path d="M144 332.5 H419" stroke="#ACACAC" stroke-dasharray="3 3"/><path d="M144 358.5 H419" stroke="#ACACAC" stroke-dasharray="3 3"/><path d="M144 384.5 H419" stroke="#ACACAC" stroke-dasharray="3 3"/><path d="M148.5 383.0v3" stroke="#ACACAC"/><path d="M155.5 383.0v3" stroke="#ACACAC"/><path d="M162.5 383.0v3" stroke="#ACACAC"/><path d="M169.5 383.0v3" stroke="#ACACAC"/><path d="M176.5 383.0v3" stroke="#ACACAC"/><path d="M183.5 383.0v3" stroke="#ACACAC"/><path d="M190.5 383.0v3" stroke="#ACACAC"/><path d="M197.5 383.0v3" stroke="#ACACAC"/><path d="M204.5 383.0v3" stroke="#ACACAC"/><path d="M210.5 383.0v3" stroke="#ACACAC"/><path d="M217.5 383.0v3" stroke="#ACACAC"/><path d="M224.5 383.0v3" stroke="#ACACAC"/><path d="M231.5 383.0v3" stroke="#ACACAC"/><path d="M238.5 383.0v3" stroke="#ACACAC"/><path d="M245.5 383.0v3" stroke="#ACACAC"/><path d="M252.5 383.0v3" stroke="#ACACAC"/><path d="M259.5 383.0v3" stroke="#ACACAC"/><path d="M266.5 383.0v3" stroke="#ACACAC"/><path d="M273.5 383.0v3" stroke="#ACACAC"/><path d="M280.5 383.0v3" stroke="#ACACAC"/><path d="M287.5 383.0v3" stroke="#ACACAC"/><path d="M294.5 383.0v3" stroke="#ACACAC"/><path d="M301.5 383.0v3" stroke="#ACACAC"/><path d="M308.5 383.0v3" stroke="#ACACAC"/><path d="M315.5 383.0v3" stroke="#ACACAC"/><path d="M322.5 383.0v3" stroke="#ACACAC"/><path d="M329.5 383.0v3" stroke="#ACACAC"/><path d="M336.5 383.0v3" stroke="#ACACAC"/><path d="M343.5 383.0v3" stroke="#ACACAC"/><path d="M350.5 383.0v3" stroke="#ACACAC"/><path d="M356.5 383.0v3" stroke="#ACACAC"/><path d="M363.5 383.0v3" stroke="#ACACAC"/><path d="M370.5 383.0v3" stroke="#ACACAC"/><path d="M377.5 383.0v3" stroke="#ACACAC"/><path d="M384.5 383.0v3" stroke="#ACACAC"/><path d="M391.5 383.0v3" stroke="#ACACAC"/><path d="M398.5 383.0v3" stroke="#ACACAC"/><path d="M405.5 383.0v3" stroke="#ACACAC"/><path d="M412.5 383.0v3" stroke="#ACACAC"/><path d="M144 409.5 H419" stroke="#ACACAC" stroke-dasharray="3 3"/><path d="M144 435.5 H419" stroke="#ACACAC" stroke-dasharray="3 3"/><path d="M144 460.5 H419" stroke="#ACACAC" stroke-dasharray="3 3"/><path d="M138 281h7l-3.5 6z" fill="#A0A0A0"/><path d="M138 486h7l-3.5 -6z" fill="#B0B0B0"/><path d="M142.2 331.8 C143.0 333.6 145.7 338.1 147.3 342.8 C148.9 347.5 150.3 353.0 151.8 360.1 C153.3 367.2 154.9 377.1 156.4 385.6 C157.9 394.1 159.6 402.6 161.0 411.1 C162.4 419.6 163.7 430.4 164.6 436.6 C165.5 442.8 165.7 446.2 166.4 448.5 C167.1 450.8 167.9 451.1 168.8 450.3 C169.7 449.5 170.5 446.4 171.9 443.9 C173.3 441.4 175.9 435.8 177.4 435.2 C178.9 434.6 179.5 438.3 181.0 440.3 C182.5 442.3 184.8 446.2 186.5 447.0 C188.2 447.8 189.5 445.8 191.0 444.8 C192.5 443.8 193.9 441.6 195.6 441.2 C197.3 440.8 199.2 441.9 201.0 442.5 C202.8 443.1 205.1 444.3 206.5 444.5 C207.9 444.7 208.2 446.1 209.3 443.9 C210.4 441.7 211.7 437.9 212.9 431.2 C214.1 424.5 215.3 413.8 216.5 403.8 C217.7 393.8 219.1 379.8 220.2 371.0 C221.3 362.2 222.0 355.7 222.9 351.0 C223.8 346.3 224.6 344.4 225.7 342.8 C226.8 341.2 228.1 341.5 229.3 341.5 C230.5 341.5 231.5 344.1 232.9 342.8 C234.3 341.5 235.7 336.1 237.5 333.7 C239.3 331.3 241.2 328.4 243.5 328.2 C245.8 328.0 249.0 331.9 251.2 332.4 C253.4 332.9 254.8 331.6 256.6 331.0 C258.4 330.4 260.3 329.3 262.1 329.1 C263.9 328.9 264.6 329.8 267.6 330.0 C270.6 330.2 277.6 329.0 280.3 330.4 C283.0 331.8 282.3 334.2 283.6 338.2 C284.9 342.2 286.5 347.3 288.2 354.6 C289.9 361.9 292.0 372.4 293.7 382.0 C295.4 391.6 297.4 407.0 298.2 412.0" stroke="#3E0E0E" stroke-width="1.1" fill="none" stroke-linejoin="round"/><path d="M300.0 423.0 C300.6 426.5 302.6 439.4 303.7 443.9 C304.8 448.4 305.3 449.5 306.4 449.8 C307.5 450.1 308.6 448.1 310.1 445.7 C311.6 443.3 313.8 436.4 315.5 435.7 C317.2 434.9 318.6 439.3 320.1 441.2 C321.6 443.1 323.2 446.4 324.7 447.2 C326.2 448.0 327.5 446.8 329.2 445.8 C330.9 444.8 332.9 441.7 334.7 441.2 C336.5 440.7 338.4 442.4 340.1 443.0 C341.8 443.6 343.3 444.9 344.7 444.8 C346.1 444.7 347.1 445.0 348.3 442.1 C349.5 439.2 350.8 435.1 352.0 427.5 C353.2 419.9 354.4 407.4 355.6 396.5 C356.8 385.6 358.2 370.4 359.3 361.9 C360.4 353.4 361.1 349.2 362.0 345.5 C362.9 341.8 363.5 340.4 364.7 339.7 C365.9 339.0 367.6 342.2 369.3 341.5 C371.0 340.8 372.7 337.7 374.8 335.5 C376.9 333.3 379.3 328.8 381.7 328.2 C384.1 327.6 386.8 331.4 389.3 331.8 C391.8 332.2 394.5 331.1 396.6 330.6 C398.7 330.2 400.0 329.1 402.1 329.1 C404.2 329.1 406.8 330.5 409.4 330.6 C412.0 330.8 416.6 330.1 418.0 330.0" stroke="#3E0E0E" stroke-width="1.1" fill="none" stroke-linejoin="round"/><path d="M415.5 313 L417.5 320" stroke="#6A1818" stroke-width="1.2"/><path d="M412 384.5l7-4.5v9z" fill="#6A1414"/><path d="M419 384.5h3.5v5M419 389.5h7M420.5 392h4M421.5 394.5h2" stroke="#6A1414" stroke-width="1" fill="none"/></svg>
<div class="t" style="left:140px;top:503px;font-family:'Liberation Serif',serif;font-size:10px">A:</div>
<div class="t" style="left:140px;top:515px;font-family:'Liberation Serif',serif;font-size:10px">B:</div>
<div class="t" style="left:193px;top:503px;font-family:'Liberation Serif',serif;font-size:10px">XA:</div>
<div class="t" style="left:193px;top:515px;font-family:'Liberation Serif',serif;font-size:10px">YA:</div>
<div class="t" style="left:271px;top:503px;font-family:'Liberation Serif',serif;font-size:10px">XB:</div>
<div class="t" style="left:271px;top:515px;font-family:'Liberation Serif',serif;font-size:10px">YB:</div>
<div class="t" style="left:347px;top:503px;font-family:'Liberation Serif',serif;font-size:10px">DX:</div>
<div class="t" style="left:347px;top:515px;font-family:'Liberation Serif',serif;font-size:10px">DY:</div>
<div class="a" style="left:128px;top:541px;width:198px;height:38px;border:1px solid #ACA899;box-shadow:inset 1px 1px 0 #FFFFFF, 1px 1px 0 #FFFFFF"></div>
<div class="t" style="left:135px;top:536px;font-size:12px;font-weight:bold;background:#ECE9D8;padding:0 1px;line-height:13px">Cursor</div>
<div class="a" style="left:138px;top:552px;width:23px;height:21px;background:#F7F6F1;border:1px solid;border-color:#716F64 #FFFFFF #FFFFFF #716F64;box-shadow:inset 1px 1px 0 #ACA899"></div>
<div class="t" style="left:138px;top:557px;width:23px;text-align:center;font-size:12px;font-weight:bold;color:#000;">A</div>
<div class="a" style="left:161px;top:552px;width:23px;height:21px;background:#ECE9D8;border:1px solid;border-color:#FFFFFF #716F64 #716F64 #FFFFFF;box-shadow:inset -1px -1px 0 #ACA899"></div>
<div class="t" style="left:161px;top:557px;width:23px;text-align:center;font-size:12px;font-weight:bold;color:#000;">B</div>
<div class="a" style="left:190px;top:552px;width:23px;height:21px;background:#ECE9D8;border:1px solid;border-color:#FFFFFF #716F64 #716F64 #FFFFFF;box-shadow:inset -1px -1px 0 #ACA899"></div>
<div class="t" style="left:190px;top:557px;width:23px;text-align:center;font-size:12px;font-weight:bold;color:#000;">On</div>
<div class="a" style="left:220px;top:552px;width:22px;height:21px;background:#ECE9D8;border:1px solid;border-color:#FFFFFF #716F64 #716F64 #FFFFFF;box-shadow:inset -1px -1px 0 #ACA899"></div>
<svg style="left:220px;top:552px" width="22" height="21"><path d="M9 10.5l5-4v8z" fill="#000"/></svg>
<div class="a" style="left:242px;top:552px;width:23px;height:21px;background:#ECE9D8;border:1px solid;border-color:#FFFFFF #716F64 #716F64 #FFFFFF;box-shadow:inset -1px -1px 0 #ACA899"></div>
<svg style="left:242px;top:552px" width="23" height="21"><path d="M14 10.5l-5-4v8z" fill="#000"/></svg>
<div class="a" style="left:271px;top:552px;width:22px;height:21px;background:#ECE9D8;border:1px solid;border-color:#FFFFFF #716F64 #716F64 #FFFFFF;box-shadow:inset -1px -1px 0 #ACA899"></div>
<svg style="left:271px;top:552px" width="22" height="21"><path d="M7 10h8l-4-4z M7 14h8l-4-4z" fill="#000"/></svg>
<div class="a" style="left:293px;top:552px;width:23px;height:21px;background:#ECE9D8;border:1px solid;border-color:#FFFFFF #716F64 #716F64 #FFFFFF;box-shadow:inset -1px -1px 0 #ACA899"></div>
<svg style="left:293px;top:552px" width="23" height="21"><path d="M7 7h8l-4 4z M7 11h8l-4 4z" fill="#000"/></svg>
<div class="a" style="left:335px;top:541px;width:97px;height:38px;border:1px solid #ACA899;box-shadow:inset 1px 1px 0 #FFFFFF, 1px 1px 0 #FFFFFF"></div>
<div class="t" style="left:342px;top:536px;font-size:12px;font-weight:bold;background:#ECE9D8;padding:0 1px;line-height:13px">Data</div>
<div class="a" style="left:345px;top:552px;width:24px;height:22px;background:#ECE9D8;border:1px solid;border-color:#FFFFFF #716F64 #716F64 #FFFFFF;box-shadow:inset -1px -1px 0 #ACA899"></div>
<div class="a" style="left:374px;top:552px;width:22px;height:22px;background:#ECE9D8;border:1px solid;border-color:#FFFFFF #716F64 #716F64 #FFFFFF;box-shadow:inset -1px -1px 0 #ACA899"></div>
<div class="a" style="left:402px;top:552px;width:22px;height:22px;background:#ECE9D8;border:1px solid;border-color:#FFFFFF #716F64 #716F64 #FFFFFF;box-shadow:inset -1px -1px 0 #ACA899"></div>
<svg style="left:345px;top:552px" width="24" height="22"><rect x="6" y="5" width="14" height="12" fill="#FFFFFF" stroke="#555"/><path d="M7 14c2-5 3 2 5-2s3 3 5-1" stroke="#0A8A0A" fill="none"/><path d="M7 15h12" stroke="#0A8A0A"/><path d="M2 9h7M7 6l4 3-4 3z" stroke="#000" stroke-width="2" fill="#000"/></svg>
<svg style="left:374px;top:552px" width="22" height="22"><rect x="3" y="4" width="13" height="11" fill="#FFFFFF" stroke="#555"/><path d="M4 9c2-4 3 2 5-1s3 3 5-1" stroke="#B01818" fill="none"/><path d="M4 12h11" stroke="#0A8A0A"/><path d="M9 15h8M15 12l4 3-4 3z" stroke="#000" stroke-width="2" fill="#000"/></svg>
<svg style="left:402px;top:552px" width="22" height="22"><rect x="4" y="4" width="14" height="14" fill="#FFFFFF" stroke="#555"/><path d="M5 17C9 9 11 8 17 6" stroke="#C01818" stroke-width="1.6" fill="none"/></svg>
<div class="a" style="left:438px;top:256px;width:110px;height:116px;border:1px solid #ACA899;box-shadow:inset 1px 1px 0 #FFFFFF, 1px 1px 0 #FFFFFF"></div>
<div class="t" style="left:446px;top:251px;font-size:12px;font-weight:bold;background:#ECE9D8;padding:0 1px;line-height:13px">Trigger</div>
<div class="a" style="left:448px;top:267px;width:45px;height:16px;background:#F7F6F1;border:1px solid;border-color:#716F64 #FFFFFF #FFFFFF #716F64;box-shadow:inset 1px 1px 0 #ACA899"></div>
<div class="t" style="left:448px;top:270px;width:45px;text-align:center;font-size:11px;color:#000;">Mode</div>
<div class="a" style="left:493px;top:267px;width:45px;height:16px;background:#ECE9D8;border:1px solid;border-color:#FFFFFF #716F64 #716F64 #FFFFFF;box-shadow:inset -1px -1px 0 #ACA899"></div>
<div class="t" style="left:493px;top:270px;width:45px;text-align:center;font-size:11px;color:#000;">Source</div>
<div class="a" style="left:448px;top:286px;width:88px;height:18px;background:#FBFCF9;border:1px solid;border-color:#ACA899 #FFFFFF #FFFFFF #ACA899;box-shadow:inset 1px 1px 0 #716F64, inset -1px -1px 0 #ECE9D8"></div>
<div class="a" style="left:451px;top:289px;width:66px;height:12px;background:#316AC5;outline:1px dotted #000"></div>
<div class="t" style="left:452px;top:290px;font-size:11px;color:#FFFFFF;">Normal</div>
<div class="a" style="left:518px;top:288px;width:16px;height:14px;background:#ECE9D8;border:1px solid;border-color:#FFFFFF #716F64 #716F64 #FFFFFF;box-shadow:inset -1px -1px 0 #ACA899"></div>
<svg style="left:518px;top:288px" width="16" height="14"><path d="M4 5 h8 l-4 4z" fill="#000"/></svg>
<div class="t" style="left:452px;top:308px;font-size:12px;font-weight:bold">Level</div>
<div class="a" style="left:448px;top:323px;width:90px;height:20px;background:#FBFCF9;border:1px solid;border-color:#ACA899 #FFFFFF #FFFFFF #ACA899;box-shadow:inset 1px 1px 0 #716F64, inset -1px -1px 0 #ECE9D8"></div>
<div class="t" style="left:451px;top:327px;font-size:11px;color:#000;">0</div>
<div class="a" style="left:521px;top:324px;width:16px;height:9px;background:#ECE9D8;border:1px solid;border-color:#FFFFFF #716F64 #716F64 #FFFFFF;box-shadow:inset -1px -1px 0 #ACA899"></div>
<div class="a" style="left:521px;top:333px;width:16px;height:9px;background:#ECE9D8;border:1px solid;border-color:#FFFFFF #716F64 #716F64 #FFFFFF;box-shadow:inset -1px -1px 0 #ACA899"></div>
<svg style="left:521px;top:324px" width="16" height="9"><path d="M4 6 h8 l-4 -4z" fill="#000"/></svg>
<svg style="left:521px;top:333px" width="16" height="9"><path d="M4 3 h8 l-4 4z" fill="#000"/></svg>
<div class="a" style="left:468px;top:347px;width:25px;height:19px;background:#F7F6F1;border:1px solid;border-color:#716F64 #FFFFFF #FFFFFF #716F64;box-shadow:inset 1px 1px 0 #ACA899"></div>
<div class="a" style="left:493px;top:347px;width:25px;height:19px;background:#ECE9D8;border:1px solid;border-color:#FFFFFF #716F64 #716F64 #FFFFFF;box-shadow:inset -1px -1px 0 #ACA899"></div>
<svg style="left:468px;top:347px" width="25" height="19"><path d="M7 14h5V5h5M9 9h6" stroke="#000" stroke-width="1.6" fill="none"/></svg>
<svg style="left:493px;top:347px" width="25" height="19"><path d="M8 5h4v9h5M10 10h6" stroke="#000" stroke-width="1.6" fill="none"/></svg>
<div class="a" style="left:438px;top:384px;width:110px;height:49px;border:1px solid #ACA899;box-shadow:inset 1px 1px 0 #FFFFFF, 1px 1px 0 #FFFFFF"></div>
<div class="t" style="left:446px;top:379px;font-size:12px;font-weight:bold;background:#ECE9D8;padding:0 1px;line-height:13px">Storage</div>
<div class="a" style="left:448px;top:394px;width:45px;height:17px;background:#ECE9D8;border:1px solid;border-color:#FFFFFF #716F64 #716F64 #FFFFFF;box-shadow:inset -1px -1px 0 #ACA899"></div>
<div class="t" style="left:448px;top:397px;width:45px;text-align:center;font-size:11px;color:#000;">Run</div>
<div class="a" style="left:493px;top:394px;width:45px;height:17px;background:#F7F6F1;border:1px solid;border-color:#716F64 #FFFFFF #FFFFFF #716F64;box-shadow:inset 1px 1px 0 #ACA899"></div>
<div class="t" style="left:493px;top:397px;width:45px;text-align:center;font-size:11px;color:#000;">Stop</div>
<div class="a" style="left:448px;top:411px;width:45px;height:17px;background:#ECE9D8;border:1px solid;border-color:#FFFFFF #716F64 #716F64 #FFFFFF;box-shadow:inset -1px -1px 0 #ACA899"></div>
<div class="t" style="left:448px;top:414px;width:45px;text-align:center;font-size:11px;color:#000;">Store</div>
<div class="a" style="left:493px;top:411px;width:45px;height:17px;background:#ECE9D8;border:1px solid;border-color:#FFFFFF #716F64 #716F64 #FFFFFF;box-shadow:inset -1px -1px 0 #ACA899"></div>
<div class="t" style="left:493px;top:414px;width:45px;text-align:center;font-size:11px;color:#000;">Erase</div>
<div class="a" style="left:438px;top:445px;width:215px;height:109px;border:1px solid #ACA899;box-shadow:inset 1px 1px 0 #FFFFFF, 1px 1px 0 #FFFFFF"></div>
<div class="t" style="left:446px;top:440px;font-size:12px;font-weight:bold;background:#ECE9D8;padding:0 1px;line-height:13px">Channel</div>
<div class="a" style="left:448px;top:457px;width:88px;height:18px;background:#FBFCF9;border:1px solid;border-color:#ACA899 #FFFFFF #FFFFFF #ACA899;box-shadow:inset 1px 1px 0 #716F64, inset -1px -1px 0 #ECE9D8"></div>
<div class="t" style="left:452px;top:461px;font-size:11px;color:#000;">VF1</div>
<div class="a" style="left:518px;top:459px;width:16px;height:14px;background:#ECE9D8;border:1px solid;border-color:#FFFFFF #716F64 #716F64 #FFFFFF;box-shadow:inset -1px -1px 0 #ACA899"></div>
<svg style="left:518px;top:459px" width="16" height="14"><path d="M4 5 h8 l-4 4z" fill="#000"/></svg>
<div class="a" style="left:448px;top:485px;width:90px;height:37px;border:1px solid #ACA899;box-shadow:inset 1px 1px 0 #FFFFFF, 1px 1px 0 #FFFFFF"></div>
<div class="t" style="left:455px;top:480px;font-size:12px;font-weight:bold;background:#ECE9D8;padding:0 1px;line-height:13px">Coupling</div>
<div class="a" style="left:454px;top:497px;width:27px;height:20px;background:#F7F6F1;border:1px solid;border-color:#716F64 #FFFFFF #FFFFFF #716F64;box-shadow:inset 1px 1px 0 #ACA899"></div>
<div class="t" style="left:454px;top:502px;width:27px;text-align:center;font-size:12px;color:#000;">DC</div>
<div class="a" style="left:481px;top:497px;width:24px;height:20px;background:#ECE9D8;border:1px solid;border-color:#FFFFFF #716F64 #716F64 #FFFFFF;box-shadow:inset -1px -1px 0 #ACA899"></div>
<svg style="left:481px;top:497px" width="24" height="20"><path d="M12 4v6M6 10h12M8 13h8M10 16h4" stroke="#000" stroke-width="1.1"/></svg>
<div class="a" style="left:505px;top:497px;width:25px;height:20px;background:#ECE9D8;border:1px solid;border-color:#FFFFFF #716F64 #716F64 #FFFFFF;box-shadow:inset -1px -1px 0 #ACA899"></div>
<div class="t" style="left:505px;top:502px;width:25px;text-align:center;font-size:12px;color:#000;">AC</div>
<div class="a" style="left:454px;top:527px;width:31px;height:22px;background:#F7F6F1;border:1px solid;border-color:#716F64 #FFFFFF #FFFFFF #716F64;box-shadow:inset 1px 1px 0 #ACA899"></div>
<div class="t" style="left:454px;top:534px;width:31px;text-align:center;font-size:12px;font-weight:bold;color:#000;">On</div>
<div class="a" style="left:500px;top:527px;width:30px;height:22px;background:#ECE9D8;border:1px solid;border-color:#FFFFFF #716F64 #716F64 #FFFFFF;box-shadow:inset -1px -1px 0 #ACA899"></div>
<svg style="left:500px;top:527px" width="30" height="22"><path d="M8 17l12-11" stroke="#A0A098" stroke-width="3"/><path d="M8 17l12-11" stroke="#FFFFFF" stroke-width="1"/><path d="M20 6l3-3" stroke="#A0A098" stroke-width="1"/></svg>
<div class="a" style="left:557px;top:256px;width:95px;height:177px;border:1px solid #ACA899;box-shadow:inset 1px 1px 0 #FFFFFF, 1px 1px 0 #FFFFFF"></div>
<div class="t" style="left:563px;top:251px;font-size:12px;font-weight:bold;background:#ECE9D8;padding:0 1px;line-height:13px">Horizontal</div>
<div class="t" style="left:570px;top:270px;font-size:12px;font-weight:bold">Time/Div</div>
<div class="a" style="left:566px;top:285px;width:78px;height:20px;background:#FBFCF9;border:1px solid;border-color:#ACA899 #FFFFFF #FFFFFF #ACA899;box-shadow:inset 1px 1px 0 #716F64, inset -1px -1px 0 #ECE9D8"></div>
<div class="t" style="left:569px;top:289px;font-size:11px;color:#000;">20u</div>
<div class="a" style="left:627px;top:286px;width:16px;height:9px;background:#ECE9D8;border:1px solid;border-color:#FFFFFF #716F64 #716F64 #FFFFFF;box-shadow:inset -1px -1px 0 #ACA899"></div>
<div class="a" style="left:627px;top:295px;width:16px;height:9px;background:#ECE9D8;border:1px solid;border-color:#FFFFFF #716F64 #716F64 #FFFFFF;box-shadow:inset -1px -1px 0 #ACA899"></div>
<svg style="left:627px;top:286px" width="16" height="9"><path d="M4 6 h8 l-4 -4z" fill="#000"/></svg>
<svg style="left:627px;top:295px" width="16" height="9"><path d="M4 3 h8 l-4 4z" fill="#000"/></svg>
<div class="t" style="left:570px;top:308px;font-size:12px;font-weight:bold">Position</div>
<div class="a" style="left:566px;top:323px;width:78px;height:20px;background:#FBFCF9;border:1px solid;border-color:#ACA899 #FFFFFF #FFFFFF #ACA899;box-shadow:inset 1px 1px 0 #716F64, inset -1px -1px 0 #ECE9D8"></div>
<div class="t" style="left:569px;top:327px;font-size:11px;color:#000;">0</div>
<div class="a" style="left:627px;top:324px;width:16px;height:9px;background:#ECE9D8;border:1px solid;border-color:#FFFFFF #716F64 #716F64 #FFFFFF;box-shadow:inset -1px -1px 0 #ACA899"></div>
<div class="a" style="left:627px;top:333px;width:16px;height:9px;background:#ECE9D8;border:1px solid;border-color:#FFFFFF #716F64 #716F64 #FFFFFF;box-shadow:inset -1px -1px 0 #ACA899"></div>
<svg style="left:627px;top:324px" width="16" height="9"><path d="M4 6 h8 l-4 -4z" fill="#000"/></svg>
<svg style="left:627px;top:333px" width="16" height="9"><path d="M4 3 h8 l-4 4z" fill="#000"/></svg>
<div class="t" style="left:570px;top:350px;font-size:12px;font-weight:bold">Mode</div>
<div class="a" style="left:567px;top:365px;width:38px;height:17px;background:#F7F6F1;border:1px solid;border-color:#716F64 #FFFFFF #FFFFFF #716F64;box-shadow:inset 1px 1px 0 #ACA899"></div>
<div class="t" style="left:567px;top:368px;width:38px;text-align:center;font-size:11px;color:#000;">Y/T</div>
<div class="a" style="left:605px;top:365px;width:38px;height:17px;background:#ECE9D8;border:1px solid;border-color:#FFFFFF #716F64 #716F64 #FFFFFF;box-shadow:inset -1px -1px 0 #ACA899"></div>
<div class="t" style="left:605px;top:368px;width:38px;text-align:center;font-size:11px;color:#000;">Y/X</div>
<div class="t" style="left:569px;top:387px;font-size:12px;font-weight:bold">X Source</div>
<div class="a" style="left:566px;top:404px;width:76px;height:19px;background:#FBFCF9;border:1px solid;border-color:#ACA899 #FFFFFF #FFFFFF #ACA899;box-shadow:inset 1px 1px 0 #716F64, inset -1px -1px 0 #ECE9D8"></div>
<div class="t" style="left:570px;top:408px;font-size:11px;color:#000;">VF1</div>
<div class="a" style="left:624px;top:406px;width:16px;height:15px;background:#ECE9D8;border:1px solid;border-color:#FFFFFF #716F64 #716F64 #FFFFFF;box-shadow:inset -1px -1px 0 #ACA899"></div>
<svg style="left:624px;top:406px" width="16" height="15"><path d="M4 5 h8 l-4 4z" fill="#000"/></svg>
<div class="a" style="left:548px;top:453px;width:96px;height:94px;border:1px solid #ACA899;box-shadow:inset 1px 1px 0 #FFFFFF, 1px 1px 0 #FFFFFF"></div>
<div class="t" style="left:555px;top:448px;font-size:12px;font-weight:bold;background:#ECE9D8;padding:0 1px;line-height:13px">Vertical</div>
<div class="t" style="left:562px;top:466px;font-size:12px;font-weight:bold">Volts/Div</div>
<div class="a" style="left:557px;top:481px;width:79px;height:20px;background:#FBFCF9;border:1px solid;border-color:#ACA899 #FFFFFF #FFFFFF #ACA899;box-shadow:inset 1px 1px 0 #716F64, inset -1px -1px 0 #ECE9D8"></div>
<div class="t" style="left:560px;top:485px;font-size:11px;color:#000;">10</div>
<div class="a" style="left:619px;top:482px;width:16px;height:9px;background:#ECE9D8;border:1px solid;border-color:#FFFFFF #716F64 #716F64 #FFFFFF;box-shadow:inset -1px -1px 0 #ACA899"></div>
<div class="a" style="left:619px;top:491px;width:16px;height:9px;background:#ECE9D8;border:1px solid;border-color:#FFFFFF #716F64 #716F64 #FFFFFF;box-shadow:inset -1px -1px 0 #ACA899"></div>
<svg style="left:619px;top:482px" width="16" height="9"><path d="M4 6 h8 l-4 -4z" fill="#000"/></svg>
<svg style="left:619px;top:491px" width="16" height="9"><path d="M4 3 h8 l-4 4z" fill="#000"/></svg>
<div class="t" style="left:565px;top:504px;font-size:12px;font-weight:bold">Position</div>
<div class="a" style="left:557px;top:519px;width:79px;height:20px;background:#FBFCF9;border:1px solid;border-color:#ACA899 #FFFFFF #FFFFFF #ACA899;box-shadow:inset 1px 1px 0 #716F64, inset -1px -1px 0 #ECE9D8"></div>
<div class="t" style="left:560px;top:523px;font-size:11px;color:#000;">0</div>
<div class="a" style="left:619px;top:520px;width:16px;height:9px;background:#ECE9D8;border:1px solid;border-color:#FFFFFF #716F64 #716F64 #FFFFFF;box-shadow:inset -1px -1px 0 #ACA899"></div>
<div class="a" style="left:619px;top:529px;width:16px;height:9px;background:#ECE9D8;border:1px solid;border-color:#FFFFFF #716F64 #716F64 #FFFFFF;box-shadow:inset -1px -1px 0 #ACA899"></div>
<svg style="left:619px;top:520px" width="16" height="9"><path d="M4 6 h8 l-4 -4z" fill="#000"/></svg>
<svg style="left:619px;top:529px" width="16" height="9"><path d="M4 3 h8 l-4 4z" fill="#000"/></svg>
<div class="a" style="left:438px;top:561px;width:216px;height:20px;background:#ECE9D8;border:1px solid;border-color:#FFFFFF #716F64 #716F64 #FFFFFF;box-shadow:inset -1px -1px 0 #ACA899"></div>
<div class="t" style="left:438px;top:566px;width:216px;text-align:center;font-size:12px;font-weight:bold;color:#000;">Auto</div>
<!-- taskbar -->
<div class="a" style="left:0px;top:733px;width:1024px;height:35px;background:linear-gradient(#2A62D8 0,#2E66DA 4px,#3D7BEA 5px,#2B6BE4 7px,#2462DC 12px,#245EDB 28px,#1E50C4 35px)"></div>
<div class="a" style="left:0px;top:738px;width:98px;height:30px;background:radial-gradient(ellipse at 50% 30%,#4EB84E 0,#37A237 45%,#2A8A2A 80%,#1E6E1E 100%);border-radius:0 14px 14px 0"></div>
<svg style="left:10px;top:743px" width="22" height="20"><path d="M2 3c3-2 6-1 8 0l-1.5 6c-2-1-5-1-8 0z" fill="#F05A28"/><path d="M11 3c3 1 6 1 9 0l-1.5 6c-3 1-6 1-9 0z" fill="#7CBB00"/><path d="M1 10c3-1 6-1 8 0l-1.5 6c-2-1-5-1-8 0z" fill="#2A7FE0"/><path d="M10 10c3 1 6 1 9 0l-1.5 6c-3 1-6 1-9 0z" fill="#FFC000"/></svg>
<div class="t" style="left:35px;top:745px;font-size:17px;font-weight:bold;font-style:italic;color:#FFFFFF;text-shadow:1px 1px 1px #1A4A1A">Start</div>
<div class="a" style="left:110px;top:742px;width:2px;height:2px;background:#1B3E9E"></div>
<div class="a" style="left:110px;top:746px;width:2px;height:2px;background:#1B3E9E"></div>
<div class="a" style="left:110px;top:750px;width:2px;height:2px;background:#1B3E9E"></div>
<div class="a" style="left:110px;top:754px;width:2px;height:2px;background:#1B3E9E"></div>
<div class="a" style="left:110px;top:758px;width:2px;height:2px;background:#1B3E9E"></div>
<div class="a" style="left:212px;top:742px;width:2px;height:2px;background:#1B3E9E"></div>
<div class="a" style="left:212px;top:746px;width:2px;height:2px;background:#1B3E9E"></div>
<div class="a" style="left:212px;top:750px;width:2px;height:2px;background:#1B3E9E"></div>
<div class="a" style="left:212px;top:754px;width:2px;height:2px;background:#1B3E9E"></div>
<div class="a" style="left:212px;top:758px;width:2px;height:2px;background:#1B3E9E"></div>
<div class="a" style="left:867px;top:742px;width:2px;height:2px;background:#1B3E9E"></div>
<div class="a" style="left:867px;top:746px;width:2px;height:2px;background:#1B3E9E"></div>
<div class="a" style="left:867px;top:750px;width:2px;height:2px;background:#1B3E9E"></div>
<div class="a" style="left:867px;top:754px;width:2px;height:2px;background:#1B3E9E"></div>
<div class="a" style="left:867px;top:758px;width:2px;height:2px;background:#1B3E9E"></div>
<svg style="left:121px;top:744px" width="17" height="17"><circle cx="8.5" cy="8.5" r="7" fill="#E8F0FF" stroke="#3060C0" stroke-width="1.5"/><path d="M5 7h6v5H5z" fill="none" stroke="#203060" stroke-width="1.2"/><path d="M8 9l5-5" stroke="#3060C0" stroke-width="1.5"/></svg>
<svg style="left:144px;top:743px" width="17" height="18"><ellipse cx="9" cy="10" rx="6" ry="6" fill="#3A9AF0"/><path d="M5 10h8" stroke="#FFFFFF" stroke-width="2"/><ellipse cx="9" cy="9" rx="8" ry="3.5" fill="none" stroke="#F0C040" stroke-width="1.5" transform="rotate(-30 9 9)"/></svg>
<svg style="left:167px;top:743px" width="17" height="18"><circle cx="8.5" cy="10" r="7" fill="#F08A20"/><circle cx="8.5" cy="10" r="4" fill="#FFC060"/><path d="M4 3l4 3 5-3" stroke="#E0E0E0" stroke-width="1.5" fill="none"/></svg>
<div class="t" style="left:194px;top:743px;font-size:10px;color:#C0D8FF">&raquo;</div>
<div class="a" style="left:221px;top:741px;width:69px;height:24px;background:linear-gradient(#4A8CF6,#3C81F3 40%,#3575EC);border-radius:3px;box-shadow:inset -1px -1px 0 #2A5EC8, inset 1px 1px 0 #6AA2FA"></div>
<div class="t" style="left:249px;top:747px;font-size:12px;color:#FFFFFF;">Pr...</div>
<div class="a" style="left:292px;top:741px;width:69px;height:24px;background:linear-gradient(#4A8CF6,#3C81F3 40%,#3575EC);border-radius:3px;box-shadow:inset -1px -1px 0 #2A5EC8, inset 1px 1px 0 #6AA2FA"></div>
<div class="t" style="left:320px;top:747px;font-size:12px;color:#FFFFFF;">Er...</div>
<div class="a" style="left:363px;top:741px;width:69px;height:24px;background:linear-gradient(#4A8CF6,#3C81F3 40%,#3575EC);border-radius:3px;box-shadow:inset -1px -1px 0 #2A5EC8, inset 1px 1px 0 #6AA2FA"></div>
<div class="t" style="left:391px;top:747px;font-size:12px;color:#FFFFFF;">To...</div>
<div class="a" style="left:434px;top:741px;width:69px;height:24px;background:linear-gradient(#4A8CF6,#3C81F3 40%,#3575EC);border-radius:3px;box-shadow:inset -1px -1px 0 #2A5EC8, inset 1px 1px 0 #6AA2FA"></div>
<div class="t" style="left:462px;top:747px;font-size:12px;color:#FFFFFF;">Né...</div>
<div class="a" style="left:505px;top:741px;width:69px;height:24px;background:linear-gradient(#4A8CF6,#3C81F3 40%,#3575EC);border-radius:3px;box-shadow:inset -1px -1px 0 #2A5EC8, inset 1px 1px 0 #6AA2FA"></div>
<div class="t" style="left:533px;top:747px;font-size:12px;color:#FFFFFF;">Hál...</div>
<div class="a" style="left:576px;top:741px;width:69px;height:24px;background:linear-gradient(#4A8CF6,#3C81F3 40%,#3575EC);border-radius:3px;box-shadow:inset -1px -1px 0 #2A5EC8, inset 1px 1px 0 #6AA2FA"></div>
<div class="t" style="left:604px;top:747px;font-size:12px;color:#FFFFFF;">3 F.</div>
<div class="a" style="left:647px;top:741px;width:69px;height:24px;background:linear-gradient(#4A8CF6,#3C81F3 40%,#3575EC);border-radius:3px;box-shadow:inset -1px -1px 0 #2A5EC8, inset 1px 1px 0 #6AA2FA"></div>
<div class="t" style="left:675px;top:747px;font-size:12px;color:#FFFFFF;">nni...</div>
<div class="a" style="left:718px;top:741px;width:69px;height:24px;background:#1E48B8;border-radius:3px;box-shadow:inset 1px 1px 2px #10308A"></div>
<div class="t" style="left:746px;top:747px;font-size:12px;color:#FFFFFF;">TINA</div>
<div class="a" style="left:789px;top:741px;width:69px;height:24px;background:linear-gradient(#4A8CF6,#3C81F3 40%,#3575EC);border-radius:3px;box-shadow:inset -1px -1px 0 #2A5EC8, inset 1px 1px 0 #6AA2FA"></div>
<div class="t" style="left:817px;top:747px;font-size:12px;color:#FFFFFF;">Vá...</div>
<svg style="left:228px;top:745px" width="17" height="17"><circle cx="6" cy="6" r="3.5" fill="#F0A040"/><circle cx="11" cy="9" r="3.5" fill="#60B0F0"/><circle cx="6" cy="12" r="3.5" fill="#80C040"/></svg>
<svg style="left:299px;top:745px" width="17" height="17"><circle cx="8.5" cy="8.5" r="7.5" fill="#DD4030"/><path d="M8.5 1a7.5 7.5 0 0 1 6.5 11.2L8.5 8.5z" fill="#F8C828"/><path d="M2 12.2A7.5 7.5 0 0 0 15 12.2L8.5 8.5z" fill="#3AA04A"/><circle cx="8.5" cy="8.5" r="3.5" fill="#4A8AF0" stroke="#FFF" stroke-width="1.2"/></svg>
<svg style="left:370px;top:745px" width="17" height="17"><rect x="2" y="1" width="13" height="15" fill="#202880"/><rect x="4" y="2" width="9" height="6" fill="#F0F0F0"/><rect x="4" y="10" width="9" height="5" fill="#E03030"/><path d="M4 12h9" stroke="#FFF"/></svg>
<svg style="left:441px;top:745px" width="17" height="17"><path d="M3 2h9l3 3v11H3z" fill="#C8E0F8" stroke="#3060A0"/><path d="M5 6h7M5 9h7M5 12h7" stroke="#5080C0"/></svg>
<svg style="left:512px;top:745px" width="17" height="17"><circle cx="8" cy="8" r="6.5" fill="#3A9A4A" stroke="#1A5AA0"/><path d="M3 13l10 3" stroke="#C0C0D0" stroke-width="2"/></svg>
<svg style="left:583px;top:745px" width="17" height="17"><rect x="1.5" y="1.5" width="14" height="14" fill="#F8F8F8" stroke="#707070"/><path d="M3 13l10-9" stroke="#F0A020" stroke-width="3"/></svg>
<svg style="left:654px;top:745px" width="17" height="17"><rect x="3" y="1" width="11" height="15" fill="#FFFFFF" stroke="#303030"/><path d="M5 4h7M5 7h7M5 10h7" stroke="#303030"/><path d="M7 15l3-5 3 5" stroke="#C02020" stroke-width="1.5" fill="none"/></svg>
<svg style="left:725px;top:745px" width="17" height="17"><rect x="0" y="0" width="16" height="7" fill="#D4D4DC"/><path d="M1 1.5l3 3M1 5l5-4M3 3h4" stroke="#222" stroke-width="1.3"/><ellipse cx="11.5" cy="3.8" rx="3.6" ry="2.9" fill="#F4F000" stroke="#2A2A00" stroke-width="0.9"/><rect x="0" y="8" width="16" height="8" fill="#1C2470"/><rect x="1" y="9" width="8" height="6" fill="#F4F4FF"/><path d="M1 12h8M3.5 9v6M6.5 9v6" stroke="#4050A0" stroke-width="0.9"/><rect x="10" y="9" width="5" height="6" fill="#9AA0C0"/><path d="M10 12h5M12.5 9v6" stroke="#505A90" stroke-width="0.8"/></svg>
<svg style="left:796px;top:745px" width="17" height="17"><rect x="0" y="0" width="17" height="17" fill="#FFFFFF"/><path d="M8 2l2 4 4-1-2 4 4 2-4 1 1 4-4-2-2 3-1-4-4 1 2-4-3-2 4-1-1-4z" fill="#E01818"/></svg>
<svg style="left:634px;top:750px" width="8" height="6"><path d="M0 0h7l-3.5 4z" fill="#FFFFFF"/></svg>
<div class="t" style="left:879px;top:747px;font-size:12px;color:#FFFFFF;">HU</div>
<div class="a" style="left:912px;top:738px;width:112px;height:30px;background:linear-gradient(#18A0F0 0,#0C8CEA 5px,#0A86E4 25px,#0A7ADA 30px);border-left:1px solid #0A5AB8;border-top-left-radius:2px"></div>
<svg style="left:903px;top:743px" width="20" height="20"><circle cx="10" cy="10" r="9" fill="#3A8CF0" stroke="#FFFFFF" stroke-width="1.5"/><path d="M12 5l-5 5 5 5" stroke="#FFFFFF" stroke-width="2.2" fill="none"/></svg>
<svg style="left:924px;top:745px" width="17" height="16"><rect x="1" y="3" width="9" height="7" fill="#C0D0E0" stroke="#303850"/><path d="M3 12h6M5 10v2" stroke="#303850"/><path d="M12 3c2 2 2 5 0 7M14 1c3 3 3 8 0 11" stroke="#FFFFFF" fill="none"/></svg>
<svg style="left:943px;top:744px" width="14" height="16"><path d="M7 1l6 2v5c0 4-3 6-6 7-3-1-6-3-6-7V3z" fill="#D02020" stroke="#FFFFFF" stroke-width="0.8"/><circle cx="7" cy="8" r="3" fill="#FFFFFF"/><path d="M5.5 6.5l3 3M8.5 6.5l-3 3" stroke="#D02020" stroke-width="1.2"/></svg>
<svg style="left:960px;top:744px" width="17" height="17"><rect x="0" y="0" width="17" height="17" fill="#101010"/><path d="M0 17V8l3-3 4 2 2 8 8 1v1z" fill="#1A9A1A"/><path d="M0 8l3-3 4 2 2 8 8 1" stroke="#E0E0E0" stroke-width="0.6" fill="none"/></svg>
<div class="t" style="left:986px;top:746px;font-size:12px;color:#FFFFFF;">2:59</div>
</body></html>
